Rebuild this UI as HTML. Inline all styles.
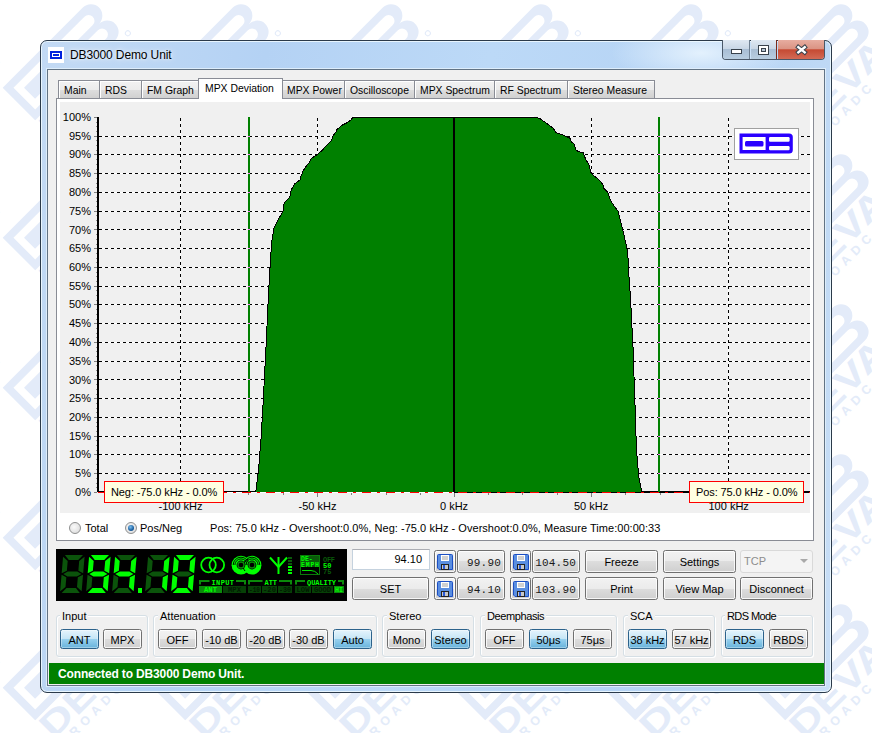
<!DOCTYPE html>
<html><head><meta charset="utf-8">
<style>
*{box-sizing:border-box;margin:0;padding:0}
html,body{width:872px;height:733px;overflow:hidden;background:#fff;font-family:"Liberation Sans",sans-serif;font-size:11px;color:#000}
.a{position:absolute}
svg{position:absolute;left:0;top:0}
#frame{position:absolute;left:40px;top:40px;width:792px;height:653px;border:1px solid #2b3a4a;border-radius:7px;
 background:radial-gradient(ellipse 90px 30px at 660px 12px,rgba(235,246,255,.85),rgba(235,246,255,0)),linear-gradient(100deg,#c3daf4 0%,#b4d2f4 25%,#bcd9f7 50%,#b5d3f4 75%,#c8def6 100%);box-shadow:inset 0 0 0 1px rgba(240,250,255,.85)}
#client{position:absolute;left:47px;top:69px;width:778px;height:617px;border:1px solid #627384;background:#f0f0f0;box-shadow:0 0 0 1px rgba(225,240,252,.9)}
.btn{position:absolute;border:1px solid #707070;border-radius:2.5px;background:linear-gradient(#f2f2f2 0%,#ebebeb 50%,#dddddd 50%,#cfcfcf 100%);box-shadow:inset 0 0 0 1px rgba(255,255,255,.8);text-align:center;color:#000}
.btn.on{border-color:#2c628b;background:linear-gradient(#e5f4fc 0%,#c4e5f6 50%,#98d1ef 50%,#68b3db 100%);box-shadow:inset 0 0 0 1px rgba(255,255,255,.35)}
.gb{position:absolute;border:1px solid #d5dfe5;border-radius:3px;box-shadow:inset 1px 1px 0 #fff,1px 1px 0 #fff}
.gbl{position:absolute;background:#f0f0f0;padding:0 2px;line-height:13px}
.tab{position:absolute;top:80px;height:19px;border:1px solid #898c95;border-bottom:none;background:linear-gradient(#f2f2f2 0%,#ebebeb 50%,#dddddd 50%,#cfcfcf 100%);box-shadow:inset 1px 1px 0 #fff;padding-left:5px;font-size:10.4px;line-height:19px;white-space:nowrap}
.tab.sel{top:78px;height:21px;background:#fff;z-index:2;line-height:19px;padding-left:6px}
#panel{position:absolute;left:56px;top:98px;width:758px;height:443px;border:1px solid #898c95;background:#fff}
.yl{left:50px;width:41px;text-align:right;line-height:12px}
.xl{top:500px;width:80px;text-align:center;line-height:12px}
.mono{font-family:"Liberation Mono",monospace;font-size:11px;text-align:right;padding-right:3px;padding-top:1px;line-height:22px;letter-spacing:0.2px;color:#1a1a1a}
.lbl{position:absolute;line-height:13px;white-space:nowrap}
</style></head><body>
<svg width="872" height="733"><g transform="translate(-297.3,-212.3) rotate(-45)"><path d="M0,0 H113 A11.75,11.5 0 0 1 113,23 A11.75,11.5 0 0 1 113,46 H0 Z M7.6,7.6 H62 V38.4 H7.6 Z M15,15.2 H55 V30.8 H15 Z M69.6,7.6 H108 A5.9,5.9 0 0 1 108,19.4 H69.6 Z M69.6,26.6 H108 A5.9,5.9 0 0 1 108,38.4 H69.6 Z" fill="#e3ebf9" fill-rule="evenodd"/><text x="-1" y="73" font-family="Liberation Sans" font-weight="bold" font-size="35" fill="#e3ebf9" textLength="122" lengthAdjust="spacingAndGlyphs">DEVA</text><text x="1" y="86" font-family="Liberation Sans" font-weight="bold" font-size="12.5" fill="#e3ebf9" textLength="124" lengthAdjust="spacing">BROADCAST</text><circle cx="127" cy="50" r="2.5" fill="none" stroke="#e3ebf9" stroke-width="1"/></g>
<g transform="translate(-297.3,-62.3) rotate(-45)"><path d="M0,0 H113 A11.75,11.5 0 0 1 113,23 A11.75,11.5 0 0 1 113,46 H0 Z M7.6,7.6 H62 V38.4 H7.6 Z M15,15.2 H55 V30.8 H15 Z M69.6,7.6 H108 A5.9,5.9 0 0 1 108,19.4 H69.6 Z M69.6,26.6 H108 A5.9,5.9 0 0 1 108,38.4 H69.6 Z" fill="#e3ebf9" fill-rule="evenodd"/><text x="-1" y="73" font-family="Liberation Sans" font-weight="bold" font-size="35" fill="#e3ebf9" textLength="122" lengthAdjust="spacingAndGlyphs">DEVA</text><text x="1" y="86" font-family="Liberation Sans" font-weight="bold" font-size="12.5" fill="#e3ebf9" textLength="124" lengthAdjust="spacing">BROADCAST</text><circle cx="127" cy="50" r="2.5" fill="none" stroke="#e3ebf9" stroke-width="1"/></g>
<g transform="translate(-297.3,87.7) rotate(-45)"><path d="M0,0 H113 A11.75,11.5 0 0 1 113,23 A11.75,11.5 0 0 1 113,46 H0 Z M7.6,7.6 H62 V38.4 H7.6 Z M15,15.2 H55 V30.8 H15 Z M69.6,7.6 H108 A5.9,5.9 0 0 1 108,19.4 H69.6 Z M69.6,26.6 H108 A5.9,5.9 0 0 1 108,38.4 H69.6 Z" fill="#e3ebf9" fill-rule="evenodd"/><text x="-1" y="73" font-family="Liberation Sans" font-weight="bold" font-size="35" fill="#e3ebf9" textLength="122" lengthAdjust="spacingAndGlyphs">DEVA</text><text x="1" y="86" font-family="Liberation Sans" font-weight="bold" font-size="12.5" fill="#e3ebf9" textLength="124" lengthAdjust="spacing">BROADCAST</text><circle cx="127" cy="50" r="2.5" fill="none" stroke="#e3ebf9" stroke-width="1"/></g>
<g transform="translate(-297.3,237.7) rotate(-45)"><path d="M0,0 H113 A11.75,11.5 0 0 1 113,23 A11.75,11.5 0 0 1 113,46 H0 Z M7.6,7.6 H62 V38.4 H7.6 Z M15,15.2 H55 V30.8 H15 Z M69.6,7.6 H108 A5.9,5.9 0 0 1 108,19.4 H69.6 Z M69.6,26.6 H108 A5.9,5.9 0 0 1 108,38.4 H69.6 Z" fill="#e3ebf9" fill-rule="evenodd"/><text x="-1" y="73" font-family="Liberation Sans" font-weight="bold" font-size="35" fill="#e3ebf9" textLength="122" lengthAdjust="spacingAndGlyphs">DEVA</text><text x="1" y="86" font-family="Liberation Sans" font-weight="bold" font-size="12.5" fill="#e3ebf9" textLength="124" lengthAdjust="spacing">BROADCAST</text><circle cx="127" cy="50" r="2.5" fill="none" stroke="#e3ebf9" stroke-width="1"/></g>
<g transform="translate(-297.3,387.7) rotate(-45)"><path d="M0,0 H113 A11.75,11.5 0 0 1 113,23 A11.75,11.5 0 0 1 113,46 H0 Z M7.6,7.6 H62 V38.4 H7.6 Z M15,15.2 H55 V30.8 H15 Z M69.6,7.6 H108 A5.9,5.9 0 0 1 108,19.4 H69.6 Z M69.6,26.6 H108 A5.9,5.9 0 0 1 108,38.4 H69.6 Z" fill="#e3ebf9" fill-rule="evenodd"/><text x="-1" y="73" font-family="Liberation Sans" font-weight="bold" font-size="35" fill="#e3ebf9" textLength="122" lengthAdjust="spacingAndGlyphs">DEVA</text><text x="1" y="86" font-family="Liberation Sans" font-weight="bold" font-size="12.5" fill="#e3ebf9" textLength="124" lengthAdjust="spacing">BROADCAST</text><circle cx="127" cy="50" r="2.5" fill="none" stroke="#e3ebf9" stroke-width="1"/></g>
<g transform="translate(-297.3,537.7) rotate(-45)"><path d="M0,0 H113 A11.75,11.5 0 0 1 113,23 A11.75,11.5 0 0 1 113,46 H0 Z M7.6,7.6 H62 V38.4 H7.6 Z M15,15.2 H55 V30.8 H15 Z M69.6,7.6 H108 A5.9,5.9 0 0 1 108,19.4 H69.6 Z M69.6,26.6 H108 A5.9,5.9 0 0 1 108,38.4 H69.6 Z" fill="#e3ebf9" fill-rule="evenodd"/><text x="-1" y="73" font-family="Liberation Sans" font-weight="bold" font-size="35" fill="#e3ebf9" textLength="122" lengthAdjust="spacingAndGlyphs">DEVA</text><text x="1" y="86" font-family="Liberation Sans" font-weight="bold" font-size="12.5" fill="#e3ebf9" textLength="124" lengthAdjust="spacing">BROADCAST</text><circle cx="127" cy="50" r="2.5" fill="none" stroke="#e3ebf9" stroke-width="1"/></g>
<g transform="translate(-297.3,687.7) rotate(-45)"><path d="M0,0 H113 A11.75,11.5 0 0 1 113,23 A11.75,11.5 0 0 1 113,46 H0 Z M7.6,7.6 H62 V38.4 H7.6 Z M15,15.2 H55 V30.8 H15 Z M69.6,7.6 H108 A5.9,5.9 0 0 1 108,19.4 H69.6 Z M69.6,26.6 H108 A5.9,5.9 0 0 1 108,38.4 H69.6 Z" fill="#e3ebf9" fill-rule="evenodd"/><text x="-1" y="73" font-family="Liberation Sans" font-weight="bold" font-size="35" fill="#e3ebf9" textLength="122" lengthAdjust="spacingAndGlyphs">DEVA</text><text x="1" y="86" font-family="Liberation Sans" font-weight="bold" font-size="12.5" fill="#e3ebf9" textLength="124" lengthAdjust="spacing">BROADCAST</text><circle cx="127" cy="50" r="2.5" fill="none" stroke="#e3ebf9" stroke-width="1"/></g>
<g transform="translate(-297.3,837.7) rotate(-45)"><path d="M0,0 H113 A11.75,11.5 0 0 1 113,23 A11.75,11.5 0 0 1 113,46 H0 Z M7.6,7.6 H62 V38.4 H7.6 Z M15,15.2 H55 V30.8 H15 Z M69.6,7.6 H108 A5.9,5.9 0 0 1 108,19.4 H69.6 Z M69.6,26.6 H108 A5.9,5.9 0 0 1 108,38.4 H69.6 Z" fill="#e3ebf9" fill-rule="evenodd"/><text x="-1" y="73" font-family="Liberation Sans" font-weight="bold" font-size="35" fill="#e3ebf9" textLength="122" lengthAdjust="spacingAndGlyphs">DEVA</text><text x="1" y="86" font-family="Liberation Sans" font-weight="bold" font-size="12.5" fill="#e3ebf9" textLength="124" lengthAdjust="spacing">BROADCAST</text><circle cx="127" cy="50" r="2.5" fill="none" stroke="#e3ebf9" stroke-width="1"/></g>
<g transform="translate(-147.3,-212.3) rotate(-45)"><path d="M0,0 H113 A11.75,11.5 0 0 1 113,23 A11.75,11.5 0 0 1 113,46 H0 Z M7.6,7.6 H62 V38.4 H7.6 Z M15,15.2 H55 V30.8 H15 Z M69.6,7.6 H108 A5.9,5.9 0 0 1 108,19.4 H69.6 Z M69.6,26.6 H108 A5.9,5.9 0 0 1 108,38.4 H69.6 Z" fill="#e3ebf9" fill-rule="evenodd"/><text x="-1" y="73" font-family="Liberation Sans" font-weight="bold" font-size="35" fill="#e3ebf9" textLength="122" lengthAdjust="spacingAndGlyphs">DEVA</text><text x="1" y="86" font-family="Liberation Sans" font-weight="bold" font-size="12.5" fill="#e3ebf9" textLength="124" lengthAdjust="spacing">BROADCAST</text><circle cx="127" cy="50" r="2.5" fill="none" stroke="#e3ebf9" stroke-width="1"/></g>
<g transform="translate(-147.3,-62.3) rotate(-45)"><path d="M0,0 H113 A11.75,11.5 0 0 1 113,23 A11.75,11.5 0 0 1 113,46 H0 Z M7.6,7.6 H62 V38.4 H7.6 Z M15,15.2 H55 V30.8 H15 Z M69.6,7.6 H108 A5.9,5.9 0 0 1 108,19.4 H69.6 Z M69.6,26.6 H108 A5.9,5.9 0 0 1 108,38.4 H69.6 Z" fill="#e3ebf9" fill-rule="evenodd"/><text x="-1" y="73" font-family="Liberation Sans" font-weight="bold" font-size="35" fill="#e3ebf9" textLength="122" lengthAdjust="spacingAndGlyphs">DEVA</text><text x="1" y="86" font-family="Liberation Sans" font-weight="bold" font-size="12.5" fill="#e3ebf9" textLength="124" lengthAdjust="spacing">BROADCAST</text><circle cx="127" cy="50" r="2.5" fill="none" stroke="#e3ebf9" stroke-width="1"/></g>
<g transform="translate(-147.3,87.7) rotate(-45)"><path d="M0,0 H113 A11.75,11.5 0 0 1 113,23 A11.75,11.5 0 0 1 113,46 H0 Z M7.6,7.6 H62 V38.4 H7.6 Z M15,15.2 H55 V30.8 H15 Z M69.6,7.6 H108 A5.9,5.9 0 0 1 108,19.4 H69.6 Z M69.6,26.6 H108 A5.9,5.9 0 0 1 108,38.4 H69.6 Z" fill="#e3ebf9" fill-rule="evenodd"/><text x="-1" y="73" font-family="Liberation Sans" font-weight="bold" font-size="35" fill="#e3ebf9" textLength="122" lengthAdjust="spacingAndGlyphs">DEVA</text><text x="1" y="86" font-family="Liberation Sans" font-weight="bold" font-size="12.5" fill="#e3ebf9" textLength="124" lengthAdjust="spacing">BROADCAST</text><circle cx="127" cy="50" r="2.5" fill="none" stroke="#e3ebf9" stroke-width="1"/></g>
<g transform="translate(-147.3,237.7) rotate(-45)"><path d="M0,0 H113 A11.75,11.5 0 0 1 113,23 A11.75,11.5 0 0 1 113,46 H0 Z M7.6,7.6 H62 V38.4 H7.6 Z M15,15.2 H55 V30.8 H15 Z M69.6,7.6 H108 A5.9,5.9 0 0 1 108,19.4 H69.6 Z M69.6,26.6 H108 A5.9,5.9 0 0 1 108,38.4 H69.6 Z" fill="#e3ebf9" fill-rule="evenodd"/><text x="-1" y="73" font-family="Liberation Sans" font-weight="bold" font-size="35" fill="#e3ebf9" textLength="122" lengthAdjust="spacingAndGlyphs">DEVA</text><text x="1" y="86" font-family="Liberation Sans" font-weight="bold" font-size="12.5" fill="#e3ebf9" textLength="124" lengthAdjust="spacing">BROADCAST</text><circle cx="127" cy="50" r="2.5" fill="none" stroke="#e3ebf9" stroke-width="1"/></g>
<g transform="translate(-147.3,387.7) rotate(-45)"><path d="M0,0 H113 A11.75,11.5 0 0 1 113,23 A11.75,11.5 0 0 1 113,46 H0 Z M7.6,7.6 H62 V38.4 H7.6 Z M15,15.2 H55 V30.8 H15 Z M69.6,7.6 H108 A5.9,5.9 0 0 1 108,19.4 H69.6 Z M69.6,26.6 H108 A5.9,5.9 0 0 1 108,38.4 H69.6 Z" fill="#e3ebf9" fill-rule="evenodd"/><text x="-1" y="73" font-family="Liberation Sans" font-weight="bold" font-size="35" fill="#e3ebf9" textLength="122" lengthAdjust="spacingAndGlyphs">DEVA</text><text x="1" y="86" font-family="Liberation Sans" font-weight="bold" font-size="12.5" fill="#e3ebf9" textLength="124" lengthAdjust="spacing">BROADCAST</text><circle cx="127" cy="50" r="2.5" fill="none" stroke="#e3ebf9" stroke-width="1"/></g>
<g transform="translate(-147.3,537.7) rotate(-45)"><path d="M0,0 H113 A11.75,11.5 0 0 1 113,23 A11.75,11.5 0 0 1 113,46 H0 Z M7.6,7.6 H62 V38.4 H7.6 Z M15,15.2 H55 V30.8 H15 Z M69.6,7.6 H108 A5.9,5.9 0 0 1 108,19.4 H69.6 Z M69.6,26.6 H108 A5.9,5.9 0 0 1 108,38.4 H69.6 Z" fill="#e3ebf9" fill-rule="evenodd"/><text x="-1" y="73" font-family="Liberation Sans" font-weight="bold" font-size="35" fill="#e3ebf9" textLength="122" lengthAdjust="spacingAndGlyphs">DEVA</text><text x="1" y="86" font-family="Liberation Sans" font-weight="bold" font-size="12.5" fill="#e3ebf9" textLength="124" lengthAdjust="spacing">BROADCAST</text><circle cx="127" cy="50" r="2.5" fill="none" stroke="#e3ebf9" stroke-width="1"/></g>
<g transform="translate(-147.3,687.7) rotate(-45)"><path d="M0,0 H113 A11.75,11.5 0 0 1 113,23 A11.75,11.5 0 0 1 113,46 H0 Z M7.6,7.6 H62 V38.4 H7.6 Z M15,15.2 H55 V30.8 H15 Z M69.6,7.6 H108 A5.9,5.9 0 0 1 108,19.4 H69.6 Z M69.6,26.6 H108 A5.9,5.9 0 0 1 108,38.4 H69.6 Z" fill="#e3ebf9" fill-rule="evenodd"/><text x="-1" y="73" font-family="Liberation Sans" font-weight="bold" font-size="35" fill="#e3ebf9" textLength="122" lengthAdjust="spacingAndGlyphs">DEVA</text><text x="1" y="86" font-family="Liberation Sans" font-weight="bold" font-size="12.5" fill="#e3ebf9" textLength="124" lengthAdjust="spacing">BROADCAST</text><circle cx="127" cy="50" r="2.5" fill="none" stroke="#e3ebf9" stroke-width="1"/></g>
<g transform="translate(-147.3,837.7) rotate(-45)"><path d="M0,0 H113 A11.75,11.5 0 0 1 113,23 A11.75,11.5 0 0 1 113,46 H0 Z M7.6,7.6 H62 V38.4 H7.6 Z M15,15.2 H55 V30.8 H15 Z M69.6,7.6 H108 A5.9,5.9 0 0 1 108,19.4 H69.6 Z M69.6,26.6 H108 A5.9,5.9 0 0 1 108,38.4 H69.6 Z" fill="#e3ebf9" fill-rule="evenodd"/><text x="-1" y="73" font-family="Liberation Sans" font-weight="bold" font-size="35" fill="#e3ebf9" textLength="122" lengthAdjust="spacingAndGlyphs">DEVA</text><text x="1" y="86" font-family="Liberation Sans" font-weight="bold" font-size="12.5" fill="#e3ebf9" textLength="124" lengthAdjust="spacing">BROADCAST</text><circle cx="127" cy="50" r="2.5" fill="none" stroke="#e3ebf9" stroke-width="1"/></g>
<g transform="translate(2.7,-212.3) rotate(-45)"><path d="M0,0 H113 A11.75,11.5 0 0 1 113,23 A11.75,11.5 0 0 1 113,46 H0 Z M7.6,7.6 H62 V38.4 H7.6 Z M15,15.2 H55 V30.8 H15 Z M69.6,7.6 H108 A5.9,5.9 0 0 1 108,19.4 H69.6 Z M69.6,26.6 H108 A5.9,5.9 0 0 1 108,38.4 H69.6 Z" fill="#e3ebf9" fill-rule="evenodd"/><text x="-1" y="73" font-family="Liberation Sans" font-weight="bold" font-size="35" fill="#e3ebf9" textLength="122" lengthAdjust="spacingAndGlyphs">DEVA</text><text x="1" y="86" font-family="Liberation Sans" font-weight="bold" font-size="12.5" fill="#e3ebf9" textLength="124" lengthAdjust="spacing">BROADCAST</text><circle cx="127" cy="50" r="2.5" fill="none" stroke="#e3ebf9" stroke-width="1"/></g>
<g transform="translate(2.7,-62.3) rotate(-45)"><path d="M0,0 H113 A11.75,11.5 0 0 1 113,23 A11.75,11.5 0 0 1 113,46 H0 Z M7.6,7.6 H62 V38.4 H7.6 Z M15,15.2 H55 V30.8 H15 Z M69.6,7.6 H108 A5.9,5.9 0 0 1 108,19.4 H69.6 Z M69.6,26.6 H108 A5.9,5.9 0 0 1 108,38.4 H69.6 Z" fill="#e3ebf9" fill-rule="evenodd"/><text x="-1" y="73" font-family="Liberation Sans" font-weight="bold" font-size="35" fill="#e3ebf9" textLength="122" lengthAdjust="spacingAndGlyphs">DEVA</text><text x="1" y="86" font-family="Liberation Sans" font-weight="bold" font-size="12.5" fill="#e3ebf9" textLength="124" lengthAdjust="spacing">BROADCAST</text><circle cx="127" cy="50" r="2.5" fill="none" stroke="#e3ebf9" stroke-width="1"/></g>
<g transform="translate(2.7,87.7) rotate(-45)"><path d="M0,0 H113 A11.75,11.5 0 0 1 113,23 A11.75,11.5 0 0 1 113,46 H0 Z M7.6,7.6 H62 V38.4 H7.6 Z M15,15.2 H55 V30.8 H15 Z M69.6,7.6 H108 A5.9,5.9 0 0 1 108,19.4 H69.6 Z M69.6,26.6 H108 A5.9,5.9 0 0 1 108,38.4 H69.6 Z" fill="#e3ebf9" fill-rule="evenodd"/><text x="-1" y="73" font-family="Liberation Sans" font-weight="bold" font-size="35" fill="#e3ebf9" textLength="122" lengthAdjust="spacingAndGlyphs">DEVA</text><text x="1" y="86" font-family="Liberation Sans" font-weight="bold" font-size="12.5" fill="#e3ebf9" textLength="124" lengthAdjust="spacing">BROADCAST</text><circle cx="127" cy="50" r="2.5" fill="none" stroke="#e3ebf9" stroke-width="1"/></g>
<g transform="translate(2.7,237.7) rotate(-45)"><path d="M0,0 H113 A11.75,11.5 0 0 1 113,23 A11.75,11.5 0 0 1 113,46 H0 Z M7.6,7.6 H62 V38.4 H7.6 Z M15,15.2 H55 V30.8 H15 Z M69.6,7.6 H108 A5.9,5.9 0 0 1 108,19.4 H69.6 Z M69.6,26.6 H108 A5.9,5.9 0 0 1 108,38.4 H69.6 Z" fill="#e3ebf9" fill-rule="evenodd"/><text x="-1" y="73" font-family="Liberation Sans" font-weight="bold" font-size="35" fill="#e3ebf9" textLength="122" lengthAdjust="spacingAndGlyphs">DEVA</text><text x="1" y="86" font-family="Liberation Sans" font-weight="bold" font-size="12.5" fill="#e3ebf9" textLength="124" lengthAdjust="spacing">BROADCAST</text><circle cx="127" cy="50" r="2.5" fill="none" stroke="#e3ebf9" stroke-width="1"/></g>
<g transform="translate(2.7,387.7) rotate(-45)"><path d="M0,0 H113 A11.75,11.5 0 0 1 113,23 A11.75,11.5 0 0 1 113,46 H0 Z M7.6,7.6 H62 V38.4 H7.6 Z M15,15.2 H55 V30.8 H15 Z M69.6,7.6 H108 A5.9,5.9 0 0 1 108,19.4 H69.6 Z M69.6,26.6 H108 A5.9,5.9 0 0 1 108,38.4 H69.6 Z" fill="#e3ebf9" fill-rule="evenodd"/><text x="-1" y="73" font-family="Liberation Sans" font-weight="bold" font-size="35" fill="#e3ebf9" textLength="122" lengthAdjust="spacingAndGlyphs">DEVA</text><text x="1" y="86" font-family="Liberation Sans" font-weight="bold" font-size="12.5" fill="#e3ebf9" textLength="124" lengthAdjust="spacing">BROADCAST</text><circle cx="127" cy="50" r="2.5" fill="none" stroke="#e3ebf9" stroke-width="1"/></g>
<g transform="translate(2.7,537.7) rotate(-45)"><path d="M0,0 H113 A11.75,11.5 0 0 1 113,23 A11.75,11.5 0 0 1 113,46 H0 Z M7.6,7.6 H62 V38.4 H7.6 Z M15,15.2 H55 V30.8 H15 Z M69.6,7.6 H108 A5.9,5.9 0 0 1 108,19.4 H69.6 Z M69.6,26.6 H108 A5.9,5.9 0 0 1 108,38.4 H69.6 Z" fill="#e3ebf9" fill-rule="evenodd"/><text x="-1" y="73" font-family="Liberation Sans" font-weight="bold" font-size="35" fill="#e3ebf9" textLength="122" lengthAdjust="spacingAndGlyphs">DEVA</text><text x="1" y="86" font-family="Liberation Sans" font-weight="bold" font-size="12.5" fill="#e3ebf9" textLength="124" lengthAdjust="spacing">BROADCAST</text><circle cx="127" cy="50" r="2.5" fill="none" stroke="#e3ebf9" stroke-width="1"/></g>
<g transform="translate(2.7,687.7) rotate(-45)"><path d="M0,0 H113 A11.75,11.5 0 0 1 113,23 A11.75,11.5 0 0 1 113,46 H0 Z M7.6,7.6 H62 V38.4 H7.6 Z M15,15.2 H55 V30.8 H15 Z M69.6,7.6 H108 A5.9,5.9 0 0 1 108,19.4 H69.6 Z M69.6,26.6 H108 A5.9,5.9 0 0 1 108,38.4 H69.6 Z" fill="#e3ebf9" fill-rule="evenodd"/><text x="-1" y="73" font-family="Liberation Sans" font-weight="bold" font-size="35" fill="#e3ebf9" textLength="122" lengthAdjust="spacingAndGlyphs">DEVA</text><text x="1" y="86" font-family="Liberation Sans" font-weight="bold" font-size="12.5" fill="#e3ebf9" textLength="124" lengthAdjust="spacing">BROADCAST</text><circle cx="127" cy="50" r="2.5" fill="none" stroke="#e3ebf9" stroke-width="1"/></g>
<g transform="translate(2.7,837.7) rotate(-45)"><path d="M0,0 H113 A11.75,11.5 0 0 1 113,23 A11.75,11.5 0 0 1 113,46 H0 Z M7.6,7.6 H62 V38.4 H7.6 Z M15,15.2 H55 V30.8 H15 Z M69.6,7.6 H108 A5.9,5.9 0 0 1 108,19.4 H69.6 Z M69.6,26.6 H108 A5.9,5.9 0 0 1 108,38.4 H69.6 Z" fill="#e3ebf9" fill-rule="evenodd"/><text x="-1" y="73" font-family="Liberation Sans" font-weight="bold" font-size="35" fill="#e3ebf9" textLength="122" lengthAdjust="spacingAndGlyphs">DEVA</text><text x="1" y="86" font-family="Liberation Sans" font-weight="bold" font-size="12.5" fill="#e3ebf9" textLength="124" lengthAdjust="spacing">BROADCAST</text><circle cx="127" cy="50" r="2.5" fill="none" stroke="#e3ebf9" stroke-width="1"/></g>
<g transform="translate(152.7,-212.3) rotate(-45)"><path d="M0,0 H113 A11.75,11.5 0 0 1 113,23 A11.75,11.5 0 0 1 113,46 H0 Z M7.6,7.6 H62 V38.4 H7.6 Z M15,15.2 H55 V30.8 H15 Z M69.6,7.6 H108 A5.9,5.9 0 0 1 108,19.4 H69.6 Z M69.6,26.6 H108 A5.9,5.9 0 0 1 108,38.4 H69.6 Z" fill="#e3ebf9" fill-rule="evenodd"/><text x="-1" y="73" font-family="Liberation Sans" font-weight="bold" font-size="35" fill="#e3ebf9" textLength="122" lengthAdjust="spacingAndGlyphs">DEVA</text><text x="1" y="86" font-family="Liberation Sans" font-weight="bold" font-size="12.5" fill="#e3ebf9" textLength="124" lengthAdjust="spacing">BROADCAST</text><circle cx="127" cy="50" r="2.5" fill="none" stroke="#e3ebf9" stroke-width="1"/></g>
<g transform="translate(152.7,-62.3) rotate(-45)"><path d="M0,0 H113 A11.75,11.5 0 0 1 113,23 A11.75,11.5 0 0 1 113,46 H0 Z M7.6,7.6 H62 V38.4 H7.6 Z M15,15.2 H55 V30.8 H15 Z M69.6,7.6 H108 A5.9,5.9 0 0 1 108,19.4 H69.6 Z M69.6,26.6 H108 A5.9,5.9 0 0 1 108,38.4 H69.6 Z" fill="#e3ebf9" fill-rule="evenodd"/><text x="-1" y="73" font-family="Liberation Sans" font-weight="bold" font-size="35" fill="#e3ebf9" textLength="122" lengthAdjust="spacingAndGlyphs">DEVA</text><text x="1" y="86" font-family="Liberation Sans" font-weight="bold" font-size="12.5" fill="#e3ebf9" textLength="124" lengthAdjust="spacing">BROADCAST</text><circle cx="127" cy="50" r="2.5" fill="none" stroke="#e3ebf9" stroke-width="1"/></g>
<g transform="translate(152.7,87.7) rotate(-45)"><path d="M0,0 H113 A11.75,11.5 0 0 1 113,23 A11.75,11.5 0 0 1 113,46 H0 Z M7.6,7.6 H62 V38.4 H7.6 Z M15,15.2 H55 V30.8 H15 Z M69.6,7.6 H108 A5.9,5.9 0 0 1 108,19.4 H69.6 Z M69.6,26.6 H108 A5.9,5.9 0 0 1 108,38.4 H69.6 Z" fill="#e3ebf9" fill-rule="evenodd"/><text x="-1" y="73" font-family="Liberation Sans" font-weight="bold" font-size="35" fill="#e3ebf9" textLength="122" lengthAdjust="spacingAndGlyphs">DEVA</text><text x="1" y="86" font-family="Liberation Sans" font-weight="bold" font-size="12.5" fill="#e3ebf9" textLength="124" lengthAdjust="spacing">BROADCAST</text><circle cx="127" cy="50" r="2.5" fill="none" stroke="#e3ebf9" stroke-width="1"/></g>
<g transform="translate(152.7,237.7) rotate(-45)"><path d="M0,0 H113 A11.75,11.5 0 0 1 113,23 A11.75,11.5 0 0 1 113,46 H0 Z M7.6,7.6 H62 V38.4 H7.6 Z M15,15.2 H55 V30.8 H15 Z M69.6,7.6 H108 A5.9,5.9 0 0 1 108,19.4 H69.6 Z M69.6,26.6 H108 A5.9,5.9 0 0 1 108,38.4 H69.6 Z" fill="#e3ebf9" fill-rule="evenodd"/><text x="-1" y="73" font-family="Liberation Sans" font-weight="bold" font-size="35" fill="#e3ebf9" textLength="122" lengthAdjust="spacingAndGlyphs">DEVA</text><text x="1" y="86" font-family="Liberation Sans" font-weight="bold" font-size="12.5" fill="#e3ebf9" textLength="124" lengthAdjust="spacing">BROADCAST</text><circle cx="127" cy="50" r="2.5" fill="none" stroke="#e3ebf9" stroke-width="1"/></g>
<g transform="translate(152.7,387.7) rotate(-45)"><path d="M0,0 H113 A11.75,11.5 0 0 1 113,23 A11.75,11.5 0 0 1 113,46 H0 Z M7.6,7.6 H62 V38.4 H7.6 Z M15,15.2 H55 V30.8 H15 Z M69.6,7.6 H108 A5.9,5.9 0 0 1 108,19.4 H69.6 Z M69.6,26.6 H108 A5.9,5.9 0 0 1 108,38.4 H69.6 Z" fill="#e3ebf9" fill-rule="evenodd"/><text x="-1" y="73" font-family="Liberation Sans" font-weight="bold" font-size="35" fill="#e3ebf9" textLength="122" lengthAdjust="spacingAndGlyphs">DEVA</text><text x="1" y="86" font-family="Liberation Sans" font-weight="bold" font-size="12.5" fill="#e3ebf9" textLength="124" lengthAdjust="spacing">BROADCAST</text><circle cx="127" cy="50" r="2.5" fill="none" stroke="#e3ebf9" stroke-width="1"/></g>
<g transform="translate(152.7,537.7) rotate(-45)"><path d="M0,0 H113 A11.75,11.5 0 0 1 113,23 A11.75,11.5 0 0 1 113,46 H0 Z M7.6,7.6 H62 V38.4 H7.6 Z M15,15.2 H55 V30.8 H15 Z M69.6,7.6 H108 A5.9,5.9 0 0 1 108,19.4 H69.6 Z M69.6,26.6 H108 A5.9,5.9 0 0 1 108,38.4 H69.6 Z" fill="#e3ebf9" fill-rule="evenodd"/><text x="-1" y="73" font-family="Liberation Sans" font-weight="bold" font-size="35" fill="#e3ebf9" textLength="122" lengthAdjust="spacingAndGlyphs">DEVA</text><text x="1" y="86" font-family="Liberation Sans" font-weight="bold" font-size="12.5" fill="#e3ebf9" textLength="124" lengthAdjust="spacing">BROADCAST</text><circle cx="127" cy="50" r="2.5" fill="none" stroke="#e3ebf9" stroke-width="1"/></g>
<g transform="translate(152.7,687.7) rotate(-45)"><path d="M0,0 H113 A11.75,11.5 0 0 1 113,23 A11.75,11.5 0 0 1 113,46 H0 Z M7.6,7.6 H62 V38.4 H7.6 Z M15,15.2 H55 V30.8 H15 Z M69.6,7.6 H108 A5.9,5.9 0 0 1 108,19.4 H69.6 Z M69.6,26.6 H108 A5.9,5.9 0 0 1 108,38.4 H69.6 Z" fill="#e3ebf9" fill-rule="evenodd"/><text x="-1" y="73" font-family="Liberation Sans" font-weight="bold" font-size="35" fill="#e3ebf9" textLength="122" lengthAdjust="spacingAndGlyphs">DEVA</text><text x="1" y="86" font-family="Liberation Sans" font-weight="bold" font-size="12.5" fill="#e3ebf9" textLength="124" lengthAdjust="spacing">BROADCAST</text><circle cx="127" cy="50" r="2.5" fill="none" stroke="#e3ebf9" stroke-width="1"/></g>
<g transform="translate(152.7,837.7) rotate(-45)"><path d="M0,0 H113 A11.75,11.5 0 0 1 113,23 A11.75,11.5 0 0 1 113,46 H0 Z M7.6,7.6 H62 V38.4 H7.6 Z M15,15.2 H55 V30.8 H15 Z M69.6,7.6 H108 A5.9,5.9 0 0 1 108,19.4 H69.6 Z M69.6,26.6 H108 A5.9,5.9 0 0 1 108,38.4 H69.6 Z" fill="#e3ebf9" fill-rule="evenodd"/><text x="-1" y="73" font-family="Liberation Sans" font-weight="bold" font-size="35" fill="#e3ebf9" textLength="122" lengthAdjust="spacingAndGlyphs">DEVA</text><text x="1" y="86" font-family="Liberation Sans" font-weight="bold" font-size="12.5" fill="#e3ebf9" textLength="124" lengthAdjust="spacing">BROADCAST</text><circle cx="127" cy="50" r="2.5" fill="none" stroke="#e3ebf9" stroke-width="1"/></g>
<g transform="translate(302.7,-212.3) rotate(-45)"><path d="M0,0 H113 A11.75,11.5 0 0 1 113,23 A11.75,11.5 0 0 1 113,46 H0 Z M7.6,7.6 H62 V38.4 H7.6 Z M15,15.2 H55 V30.8 H15 Z M69.6,7.6 H108 A5.9,5.9 0 0 1 108,19.4 H69.6 Z M69.6,26.6 H108 A5.9,5.9 0 0 1 108,38.4 H69.6 Z" fill="#e3ebf9" fill-rule="evenodd"/><text x="-1" y="73" font-family="Liberation Sans" font-weight="bold" font-size="35" fill="#e3ebf9" textLength="122" lengthAdjust="spacingAndGlyphs">DEVA</text><text x="1" y="86" font-family="Liberation Sans" font-weight="bold" font-size="12.5" fill="#e3ebf9" textLength="124" lengthAdjust="spacing">BROADCAST</text><circle cx="127" cy="50" r="2.5" fill="none" stroke="#e3ebf9" stroke-width="1"/></g>
<g transform="translate(302.7,-62.3) rotate(-45)"><path d="M0,0 H113 A11.75,11.5 0 0 1 113,23 A11.75,11.5 0 0 1 113,46 H0 Z M7.6,7.6 H62 V38.4 H7.6 Z M15,15.2 H55 V30.8 H15 Z M69.6,7.6 H108 A5.9,5.9 0 0 1 108,19.4 H69.6 Z M69.6,26.6 H108 A5.9,5.9 0 0 1 108,38.4 H69.6 Z" fill="#e3ebf9" fill-rule="evenodd"/><text x="-1" y="73" font-family="Liberation Sans" font-weight="bold" font-size="35" fill="#e3ebf9" textLength="122" lengthAdjust="spacingAndGlyphs">DEVA</text><text x="1" y="86" font-family="Liberation Sans" font-weight="bold" font-size="12.5" fill="#e3ebf9" textLength="124" lengthAdjust="spacing">BROADCAST</text><circle cx="127" cy="50" r="2.5" fill="none" stroke="#e3ebf9" stroke-width="1"/></g>
<g transform="translate(302.7,87.7) rotate(-45)"><path d="M0,0 H113 A11.75,11.5 0 0 1 113,23 A11.75,11.5 0 0 1 113,46 H0 Z M7.6,7.6 H62 V38.4 H7.6 Z M15,15.2 H55 V30.8 H15 Z M69.6,7.6 H108 A5.9,5.9 0 0 1 108,19.4 H69.6 Z M69.6,26.6 H108 A5.9,5.9 0 0 1 108,38.4 H69.6 Z" fill="#e3ebf9" fill-rule="evenodd"/><text x="-1" y="73" font-family="Liberation Sans" font-weight="bold" font-size="35" fill="#e3ebf9" textLength="122" lengthAdjust="spacingAndGlyphs">DEVA</text><text x="1" y="86" font-family="Liberation Sans" font-weight="bold" font-size="12.5" fill="#e3ebf9" textLength="124" lengthAdjust="spacing">BROADCAST</text><circle cx="127" cy="50" r="2.5" fill="none" stroke="#e3ebf9" stroke-width="1"/></g>
<g transform="translate(302.7,237.7) rotate(-45)"><path d="M0,0 H113 A11.75,11.5 0 0 1 113,23 A11.75,11.5 0 0 1 113,46 H0 Z M7.6,7.6 H62 V38.4 H7.6 Z M15,15.2 H55 V30.8 H15 Z M69.6,7.6 H108 A5.9,5.9 0 0 1 108,19.4 H69.6 Z M69.6,26.6 H108 A5.9,5.9 0 0 1 108,38.4 H69.6 Z" fill="#e3ebf9" fill-rule="evenodd"/><text x="-1" y="73" font-family="Liberation Sans" font-weight="bold" font-size="35" fill="#e3ebf9" textLength="122" lengthAdjust="spacingAndGlyphs">DEVA</text><text x="1" y="86" font-family="Liberation Sans" font-weight="bold" font-size="12.5" fill="#e3ebf9" textLength="124" lengthAdjust="spacing">BROADCAST</text><circle cx="127" cy="50" r="2.5" fill="none" stroke="#e3ebf9" stroke-width="1"/></g>
<g transform="translate(302.7,387.7) rotate(-45)"><path d="M0,0 H113 A11.75,11.5 0 0 1 113,23 A11.75,11.5 0 0 1 113,46 H0 Z M7.6,7.6 H62 V38.4 H7.6 Z M15,15.2 H55 V30.8 H15 Z M69.6,7.6 H108 A5.9,5.9 0 0 1 108,19.4 H69.6 Z M69.6,26.6 H108 A5.9,5.9 0 0 1 108,38.4 H69.6 Z" fill="#e3ebf9" fill-rule="evenodd"/><text x="-1" y="73" font-family="Liberation Sans" font-weight="bold" font-size="35" fill="#e3ebf9" textLength="122" lengthAdjust="spacingAndGlyphs">DEVA</text><text x="1" y="86" font-family="Liberation Sans" font-weight="bold" font-size="12.5" fill="#e3ebf9" textLength="124" lengthAdjust="spacing">BROADCAST</text><circle cx="127" cy="50" r="2.5" fill="none" stroke="#e3ebf9" stroke-width="1"/></g>
<g transform="translate(302.7,537.7) rotate(-45)"><path d="M0,0 H113 A11.75,11.5 0 0 1 113,23 A11.75,11.5 0 0 1 113,46 H0 Z M7.6,7.6 H62 V38.4 H7.6 Z M15,15.2 H55 V30.8 H15 Z M69.6,7.6 H108 A5.9,5.9 0 0 1 108,19.4 H69.6 Z M69.6,26.6 H108 A5.9,5.9 0 0 1 108,38.4 H69.6 Z" fill="#e3ebf9" fill-rule="evenodd"/><text x="-1" y="73" font-family="Liberation Sans" font-weight="bold" font-size="35" fill="#e3ebf9" textLength="122" lengthAdjust="spacingAndGlyphs">DEVA</text><text x="1" y="86" font-family="Liberation Sans" font-weight="bold" font-size="12.5" fill="#e3ebf9" textLength="124" lengthAdjust="spacing">BROADCAST</text><circle cx="127" cy="50" r="2.5" fill="none" stroke="#e3ebf9" stroke-width="1"/></g>
<g transform="translate(302.7,687.7) rotate(-45)"><path d="M0,0 H113 A11.75,11.5 0 0 1 113,23 A11.75,11.5 0 0 1 113,46 H0 Z M7.6,7.6 H62 V38.4 H7.6 Z M15,15.2 H55 V30.8 H15 Z M69.6,7.6 H108 A5.9,5.9 0 0 1 108,19.4 H69.6 Z M69.6,26.6 H108 A5.9,5.9 0 0 1 108,38.4 H69.6 Z" fill="#e3ebf9" fill-rule="evenodd"/><text x="-1" y="73" font-family="Liberation Sans" font-weight="bold" font-size="35" fill="#e3ebf9" textLength="122" lengthAdjust="spacingAndGlyphs">DEVA</text><text x="1" y="86" font-family="Liberation Sans" font-weight="bold" font-size="12.5" fill="#e3ebf9" textLength="124" lengthAdjust="spacing">BROADCAST</text><circle cx="127" cy="50" r="2.5" fill="none" stroke="#e3ebf9" stroke-width="1"/></g>
<g transform="translate(302.7,837.7) rotate(-45)"><path d="M0,0 H113 A11.75,11.5 0 0 1 113,23 A11.75,11.5 0 0 1 113,46 H0 Z M7.6,7.6 H62 V38.4 H7.6 Z M15,15.2 H55 V30.8 H15 Z M69.6,7.6 H108 A5.9,5.9 0 0 1 108,19.4 H69.6 Z M69.6,26.6 H108 A5.9,5.9 0 0 1 108,38.4 H69.6 Z" fill="#e3ebf9" fill-rule="evenodd"/><text x="-1" y="73" font-family="Liberation Sans" font-weight="bold" font-size="35" fill="#e3ebf9" textLength="122" lengthAdjust="spacingAndGlyphs">DEVA</text><text x="1" y="86" font-family="Liberation Sans" font-weight="bold" font-size="12.5" fill="#e3ebf9" textLength="124" lengthAdjust="spacing">BROADCAST</text><circle cx="127" cy="50" r="2.5" fill="none" stroke="#e3ebf9" stroke-width="1"/></g>
<g transform="translate(452.7,-212.3) rotate(-45)"><path d="M0,0 H113 A11.75,11.5 0 0 1 113,23 A11.75,11.5 0 0 1 113,46 H0 Z M7.6,7.6 H62 V38.4 H7.6 Z M15,15.2 H55 V30.8 H15 Z M69.6,7.6 H108 A5.9,5.9 0 0 1 108,19.4 H69.6 Z M69.6,26.6 H108 A5.9,5.9 0 0 1 108,38.4 H69.6 Z" fill="#e3ebf9" fill-rule="evenodd"/><text x="-1" y="73" font-family="Liberation Sans" font-weight="bold" font-size="35" fill="#e3ebf9" textLength="122" lengthAdjust="spacingAndGlyphs">DEVA</text><text x="1" y="86" font-family="Liberation Sans" font-weight="bold" font-size="12.5" fill="#e3ebf9" textLength="124" lengthAdjust="spacing">BROADCAST</text><circle cx="127" cy="50" r="2.5" fill="none" stroke="#e3ebf9" stroke-width="1"/></g>
<g transform="translate(452.7,-62.3) rotate(-45)"><path d="M0,0 H113 A11.75,11.5 0 0 1 113,23 A11.75,11.5 0 0 1 113,46 H0 Z M7.6,7.6 H62 V38.4 H7.6 Z M15,15.2 H55 V30.8 H15 Z M69.6,7.6 H108 A5.9,5.9 0 0 1 108,19.4 H69.6 Z M69.6,26.6 H108 A5.9,5.9 0 0 1 108,38.4 H69.6 Z" fill="#e3ebf9" fill-rule="evenodd"/><text x="-1" y="73" font-family="Liberation Sans" font-weight="bold" font-size="35" fill="#e3ebf9" textLength="122" lengthAdjust="spacingAndGlyphs">DEVA</text><text x="1" y="86" font-family="Liberation Sans" font-weight="bold" font-size="12.5" fill="#e3ebf9" textLength="124" lengthAdjust="spacing">BROADCAST</text><circle cx="127" cy="50" r="2.5" fill="none" stroke="#e3ebf9" stroke-width="1"/></g>
<g transform="translate(452.7,87.7) rotate(-45)"><path d="M0,0 H113 A11.75,11.5 0 0 1 113,23 A11.75,11.5 0 0 1 113,46 H0 Z M7.6,7.6 H62 V38.4 H7.6 Z M15,15.2 H55 V30.8 H15 Z M69.6,7.6 H108 A5.9,5.9 0 0 1 108,19.4 H69.6 Z M69.6,26.6 H108 A5.9,5.9 0 0 1 108,38.4 H69.6 Z" fill="#e3ebf9" fill-rule="evenodd"/><text x="-1" y="73" font-family="Liberation Sans" font-weight="bold" font-size="35" fill="#e3ebf9" textLength="122" lengthAdjust="spacingAndGlyphs">DEVA</text><text x="1" y="86" font-family="Liberation Sans" font-weight="bold" font-size="12.5" fill="#e3ebf9" textLength="124" lengthAdjust="spacing">BROADCAST</text><circle cx="127" cy="50" r="2.5" fill="none" stroke="#e3ebf9" stroke-width="1"/></g>
<g transform="translate(452.7,237.7) rotate(-45)"><path d="M0,0 H113 A11.75,11.5 0 0 1 113,23 A11.75,11.5 0 0 1 113,46 H0 Z M7.6,7.6 H62 V38.4 H7.6 Z M15,15.2 H55 V30.8 H15 Z M69.6,7.6 H108 A5.9,5.9 0 0 1 108,19.4 H69.6 Z M69.6,26.6 H108 A5.9,5.9 0 0 1 108,38.4 H69.6 Z" fill="#e3ebf9" fill-rule="evenodd"/><text x="-1" y="73" font-family="Liberation Sans" font-weight="bold" font-size="35" fill="#e3ebf9" textLength="122" lengthAdjust="spacingAndGlyphs">DEVA</text><text x="1" y="86" font-family="Liberation Sans" font-weight="bold" font-size="12.5" fill="#e3ebf9" textLength="124" lengthAdjust="spacing">BROADCAST</text><circle cx="127" cy="50" r="2.5" fill="none" stroke="#e3ebf9" stroke-width="1"/></g>
<g transform="translate(452.7,387.7) rotate(-45)"><path d="M0,0 H113 A11.75,11.5 0 0 1 113,23 A11.75,11.5 0 0 1 113,46 H0 Z M7.6,7.6 H62 V38.4 H7.6 Z M15,15.2 H55 V30.8 H15 Z M69.6,7.6 H108 A5.9,5.9 0 0 1 108,19.4 H69.6 Z M69.6,26.6 H108 A5.9,5.9 0 0 1 108,38.4 H69.6 Z" fill="#e3ebf9" fill-rule="evenodd"/><text x="-1" y="73" font-family="Liberation Sans" font-weight="bold" font-size="35" fill="#e3ebf9" textLength="122" lengthAdjust="spacingAndGlyphs">DEVA</text><text x="1" y="86" font-family="Liberation Sans" font-weight="bold" font-size="12.5" fill="#e3ebf9" textLength="124" lengthAdjust="spacing">BROADCAST</text><circle cx="127" cy="50" r="2.5" fill="none" stroke="#e3ebf9" stroke-width="1"/></g>
<g transform="translate(452.7,537.7) rotate(-45)"><path d="M0,0 H113 A11.75,11.5 0 0 1 113,23 A11.75,11.5 0 0 1 113,46 H0 Z M7.6,7.6 H62 V38.4 H7.6 Z M15,15.2 H55 V30.8 H15 Z M69.6,7.6 H108 A5.9,5.9 0 0 1 108,19.4 H69.6 Z M69.6,26.6 H108 A5.9,5.9 0 0 1 108,38.4 H69.6 Z" fill="#e3ebf9" fill-rule="evenodd"/><text x="-1" y="73" font-family="Liberation Sans" font-weight="bold" font-size="35" fill="#e3ebf9" textLength="122" lengthAdjust="spacingAndGlyphs">DEVA</text><text x="1" y="86" font-family="Liberation Sans" font-weight="bold" font-size="12.5" fill="#e3ebf9" textLength="124" lengthAdjust="spacing">BROADCAST</text><circle cx="127" cy="50" r="2.5" fill="none" stroke="#e3ebf9" stroke-width="1"/></g>
<g transform="translate(452.7,687.7) rotate(-45)"><path d="M0,0 H113 A11.75,11.5 0 0 1 113,23 A11.75,11.5 0 0 1 113,46 H0 Z M7.6,7.6 H62 V38.4 H7.6 Z M15,15.2 H55 V30.8 H15 Z M69.6,7.6 H108 A5.9,5.9 0 0 1 108,19.4 H69.6 Z M69.6,26.6 H108 A5.9,5.9 0 0 1 108,38.4 H69.6 Z" fill="#e3ebf9" fill-rule="evenodd"/><text x="-1" y="73" font-family="Liberation Sans" font-weight="bold" font-size="35" fill="#e3ebf9" textLength="122" lengthAdjust="spacingAndGlyphs">DEVA</text><text x="1" y="86" font-family="Liberation Sans" font-weight="bold" font-size="12.5" fill="#e3ebf9" textLength="124" lengthAdjust="spacing">BROADCAST</text><circle cx="127" cy="50" r="2.5" fill="none" stroke="#e3ebf9" stroke-width="1"/></g>
<g transform="translate(452.7,837.7) rotate(-45)"><path d="M0,0 H113 A11.75,11.5 0 0 1 113,23 A11.75,11.5 0 0 1 113,46 H0 Z M7.6,7.6 H62 V38.4 H7.6 Z M15,15.2 H55 V30.8 H15 Z M69.6,7.6 H108 A5.9,5.9 0 0 1 108,19.4 H69.6 Z M69.6,26.6 H108 A5.9,5.9 0 0 1 108,38.4 H69.6 Z" fill="#e3ebf9" fill-rule="evenodd"/><text x="-1" y="73" font-family="Liberation Sans" font-weight="bold" font-size="35" fill="#e3ebf9" textLength="122" lengthAdjust="spacingAndGlyphs">DEVA</text><text x="1" y="86" font-family="Liberation Sans" font-weight="bold" font-size="12.5" fill="#e3ebf9" textLength="124" lengthAdjust="spacing">BROADCAST</text><circle cx="127" cy="50" r="2.5" fill="none" stroke="#e3ebf9" stroke-width="1"/></g>
<g transform="translate(602.7,-212.3) rotate(-45)"><path d="M0,0 H113 A11.75,11.5 0 0 1 113,23 A11.75,11.5 0 0 1 113,46 H0 Z M7.6,7.6 H62 V38.4 H7.6 Z M15,15.2 H55 V30.8 H15 Z M69.6,7.6 H108 A5.9,5.9 0 0 1 108,19.4 H69.6 Z M69.6,26.6 H108 A5.9,5.9 0 0 1 108,38.4 H69.6 Z" fill="#e3ebf9" fill-rule="evenodd"/><text x="-1" y="73" font-family="Liberation Sans" font-weight="bold" font-size="35" fill="#e3ebf9" textLength="122" lengthAdjust="spacingAndGlyphs">DEVA</text><text x="1" y="86" font-family="Liberation Sans" font-weight="bold" font-size="12.5" fill="#e3ebf9" textLength="124" lengthAdjust="spacing">BROADCAST</text><circle cx="127" cy="50" r="2.5" fill="none" stroke="#e3ebf9" stroke-width="1"/></g>
<g transform="translate(602.7,-62.3) rotate(-45)"><path d="M0,0 H113 A11.75,11.5 0 0 1 113,23 A11.75,11.5 0 0 1 113,46 H0 Z M7.6,7.6 H62 V38.4 H7.6 Z M15,15.2 H55 V30.8 H15 Z M69.6,7.6 H108 A5.9,5.9 0 0 1 108,19.4 H69.6 Z M69.6,26.6 H108 A5.9,5.9 0 0 1 108,38.4 H69.6 Z" fill="#e3ebf9" fill-rule="evenodd"/><text x="-1" y="73" font-family="Liberation Sans" font-weight="bold" font-size="35" fill="#e3ebf9" textLength="122" lengthAdjust="spacingAndGlyphs">DEVA</text><text x="1" y="86" font-family="Liberation Sans" font-weight="bold" font-size="12.5" fill="#e3ebf9" textLength="124" lengthAdjust="spacing">BROADCAST</text><circle cx="127" cy="50" r="2.5" fill="none" stroke="#e3ebf9" stroke-width="1"/></g>
<g transform="translate(602.7,87.7) rotate(-45)"><path d="M0,0 H113 A11.75,11.5 0 0 1 113,23 A11.75,11.5 0 0 1 113,46 H0 Z M7.6,7.6 H62 V38.4 H7.6 Z M15,15.2 H55 V30.8 H15 Z M69.6,7.6 H108 A5.9,5.9 0 0 1 108,19.4 H69.6 Z M69.6,26.6 H108 A5.9,5.9 0 0 1 108,38.4 H69.6 Z" fill="#e3ebf9" fill-rule="evenodd"/><text x="-1" y="73" font-family="Liberation Sans" font-weight="bold" font-size="35" fill="#e3ebf9" textLength="122" lengthAdjust="spacingAndGlyphs">DEVA</text><text x="1" y="86" font-family="Liberation Sans" font-weight="bold" font-size="12.5" fill="#e3ebf9" textLength="124" lengthAdjust="spacing">BROADCAST</text><circle cx="127" cy="50" r="2.5" fill="none" stroke="#e3ebf9" stroke-width="1"/></g>
<g transform="translate(602.7,237.7) rotate(-45)"><path d="M0,0 H113 A11.75,11.5 0 0 1 113,23 A11.75,11.5 0 0 1 113,46 H0 Z M7.6,7.6 H62 V38.4 H7.6 Z M15,15.2 H55 V30.8 H15 Z M69.6,7.6 H108 A5.9,5.9 0 0 1 108,19.4 H69.6 Z M69.6,26.6 H108 A5.9,5.9 0 0 1 108,38.4 H69.6 Z" fill="#e3ebf9" fill-rule="evenodd"/><text x="-1" y="73" font-family="Liberation Sans" font-weight="bold" font-size="35" fill="#e3ebf9" textLength="122" lengthAdjust="spacingAndGlyphs">DEVA</text><text x="1" y="86" font-family="Liberation Sans" font-weight="bold" font-size="12.5" fill="#e3ebf9" textLength="124" lengthAdjust="spacing">BROADCAST</text><circle cx="127" cy="50" r="2.5" fill="none" stroke="#e3ebf9" stroke-width="1"/></g>
<g transform="translate(602.7,387.7) rotate(-45)"><path d="M0,0 H113 A11.75,11.5 0 0 1 113,23 A11.75,11.5 0 0 1 113,46 H0 Z M7.6,7.6 H62 V38.4 H7.6 Z M15,15.2 H55 V30.8 H15 Z M69.6,7.6 H108 A5.9,5.9 0 0 1 108,19.4 H69.6 Z M69.6,26.6 H108 A5.9,5.9 0 0 1 108,38.4 H69.6 Z" fill="#e3ebf9" fill-rule="evenodd"/><text x="-1" y="73" font-family="Liberation Sans" font-weight="bold" font-size="35" fill="#e3ebf9" textLength="122" lengthAdjust="spacingAndGlyphs">DEVA</text><text x="1" y="86" font-family="Liberation Sans" font-weight="bold" font-size="12.5" fill="#e3ebf9" textLength="124" lengthAdjust="spacing">BROADCAST</text><circle cx="127" cy="50" r="2.5" fill="none" stroke="#e3ebf9" stroke-width="1"/></g>
<g transform="translate(602.7,537.7) rotate(-45)"><path d="M0,0 H113 A11.75,11.5 0 0 1 113,23 A11.75,11.5 0 0 1 113,46 H0 Z M7.6,7.6 H62 V38.4 H7.6 Z M15,15.2 H55 V30.8 H15 Z M69.6,7.6 H108 A5.9,5.9 0 0 1 108,19.4 H69.6 Z M69.6,26.6 H108 A5.9,5.9 0 0 1 108,38.4 H69.6 Z" fill="#e3ebf9" fill-rule="evenodd"/><text x="-1" y="73" font-family="Liberation Sans" font-weight="bold" font-size="35" fill="#e3ebf9" textLength="122" lengthAdjust="spacingAndGlyphs">DEVA</text><text x="1" y="86" font-family="Liberation Sans" font-weight="bold" font-size="12.5" fill="#e3ebf9" textLength="124" lengthAdjust="spacing">BROADCAST</text><circle cx="127" cy="50" r="2.5" fill="none" stroke="#e3ebf9" stroke-width="1"/></g>
<g transform="translate(602.7,687.7) rotate(-45)"><path d="M0,0 H113 A11.75,11.5 0 0 1 113,23 A11.75,11.5 0 0 1 113,46 H0 Z M7.6,7.6 H62 V38.4 H7.6 Z M15,15.2 H55 V30.8 H15 Z M69.6,7.6 H108 A5.9,5.9 0 0 1 108,19.4 H69.6 Z M69.6,26.6 H108 A5.9,5.9 0 0 1 108,38.4 H69.6 Z" fill="#e3ebf9" fill-rule="evenodd"/><text x="-1" y="73" font-family="Liberation Sans" font-weight="bold" font-size="35" fill="#e3ebf9" textLength="122" lengthAdjust="spacingAndGlyphs">DEVA</text><text x="1" y="86" font-family="Liberation Sans" font-weight="bold" font-size="12.5" fill="#e3ebf9" textLength="124" lengthAdjust="spacing">BROADCAST</text><circle cx="127" cy="50" r="2.5" fill="none" stroke="#e3ebf9" stroke-width="1"/></g>
<g transform="translate(602.7,837.7) rotate(-45)"><path d="M0,0 H113 A11.75,11.5 0 0 1 113,23 A11.75,11.5 0 0 1 113,46 H0 Z M7.6,7.6 H62 V38.4 H7.6 Z M15,15.2 H55 V30.8 H15 Z M69.6,7.6 H108 A5.9,5.9 0 0 1 108,19.4 H69.6 Z M69.6,26.6 H108 A5.9,5.9 0 0 1 108,38.4 H69.6 Z" fill="#e3ebf9" fill-rule="evenodd"/><text x="-1" y="73" font-family="Liberation Sans" font-weight="bold" font-size="35" fill="#e3ebf9" textLength="122" lengthAdjust="spacingAndGlyphs">DEVA</text><text x="1" y="86" font-family="Liberation Sans" font-weight="bold" font-size="12.5" fill="#e3ebf9" textLength="124" lengthAdjust="spacing">BROADCAST</text><circle cx="127" cy="50" r="2.5" fill="none" stroke="#e3ebf9" stroke-width="1"/></g>
<g transform="translate(752.7,-212.3) rotate(-45)"><path d="M0,0 H113 A11.75,11.5 0 0 1 113,23 A11.75,11.5 0 0 1 113,46 H0 Z M7.6,7.6 H62 V38.4 H7.6 Z M15,15.2 H55 V30.8 H15 Z M69.6,7.6 H108 A5.9,5.9 0 0 1 108,19.4 H69.6 Z M69.6,26.6 H108 A5.9,5.9 0 0 1 108,38.4 H69.6 Z" fill="#e3ebf9" fill-rule="evenodd"/><text x="-1" y="73" font-family="Liberation Sans" font-weight="bold" font-size="35" fill="#e3ebf9" textLength="122" lengthAdjust="spacingAndGlyphs">DEVA</text><text x="1" y="86" font-family="Liberation Sans" font-weight="bold" font-size="12.5" fill="#e3ebf9" textLength="124" lengthAdjust="spacing">BROADCAST</text><circle cx="127" cy="50" r="2.5" fill="none" stroke="#e3ebf9" stroke-width="1"/></g>
<g transform="translate(752.7,-62.3) rotate(-45)"><path d="M0,0 H113 A11.75,11.5 0 0 1 113,23 A11.75,11.5 0 0 1 113,46 H0 Z M7.6,7.6 H62 V38.4 H7.6 Z M15,15.2 H55 V30.8 H15 Z M69.6,7.6 H108 A5.9,5.9 0 0 1 108,19.4 H69.6 Z M69.6,26.6 H108 A5.9,5.9 0 0 1 108,38.4 H69.6 Z" fill="#e3ebf9" fill-rule="evenodd"/><text x="-1" y="73" font-family="Liberation Sans" font-weight="bold" font-size="35" fill="#e3ebf9" textLength="122" lengthAdjust="spacingAndGlyphs">DEVA</text><text x="1" y="86" font-family="Liberation Sans" font-weight="bold" font-size="12.5" fill="#e3ebf9" textLength="124" lengthAdjust="spacing">BROADCAST</text><circle cx="127" cy="50" r="2.5" fill="none" stroke="#e3ebf9" stroke-width="1"/></g>
<g transform="translate(752.7,87.7) rotate(-45)"><path d="M0,0 H113 A11.75,11.5 0 0 1 113,23 A11.75,11.5 0 0 1 113,46 H0 Z M7.6,7.6 H62 V38.4 H7.6 Z M15,15.2 H55 V30.8 H15 Z M69.6,7.6 H108 A5.9,5.9 0 0 1 108,19.4 H69.6 Z M69.6,26.6 H108 A5.9,5.9 0 0 1 108,38.4 H69.6 Z" fill="#e3ebf9" fill-rule="evenodd"/><text x="-1" y="73" font-family="Liberation Sans" font-weight="bold" font-size="35" fill="#e3ebf9" textLength="122" lengthAdjust="spacingAndGlyphs">DEVA</text><text x="1" y="86" font-family="Liberation Sans" font-weight="bold" font-size="12.5" fill="#e3ebf9" textLength="124" lengthAdjust="spacing">BROADCAST</text><circle cx="127" cy="50" r="2.5" fill="none" stroke="#e3ebf9" stroke-width="1"/></g>
<g transform="translate(752.7,237.7) rotate(-45)"><path d="M0,0 H113 A11.75,11.5 0 0 1 113,23 A11.75,11.5 0 0 1 113,46 H0 Z M7.6,7.6 H62 V38.4 H7.6 Z M15,15.2 H55 V30.8 H15 Z M69.6,7.6 H108 A5.9,5.9 0 0 1 108,19.4 H69.6 Z M69.6,26.6 H108 A5.9,5.9 0 0 1 108,38.4 H69.6 Z" fill="#e3ebf9" fill-rule="evenodd"/><text x="-1" y="73" font-family="Liberation Sans" font-weight="bold" font-size="35" fill="#e3ebf9" textLength="122" lengthAdjust="spacingAndGlyphs">DEVA</text><text x="1" y="86" font-family="Liberation Sans" font-weight="bold" font-size="12.5" fill="#e3ebf9" textLength="124" lengthAdjust="spacing">BROADCAST</text><circle cx="127" cy="50" r="2.5" fill="none" stroke="#e3ebf9" stroke-width="1"/></g>
<g transform="translate(752.7,387.7) rotate(-45)"><path d="M0,0 H113 A11.75,11.5 0 0 1 113,23 A11.75,11.5 0 0 1 113,46 H0 Z M7.6,7.6 H62 V38.4 H7.6 Z M15,15.2 H55 V30.8 H15 Z M69.6,7.6 H108 A5.9,5.9 0 0 1 108,19.4 H69.6 Z M69.6,26.6 H108 A5.9,5.9 0 0 1 108,38.4 H69.6 Z" fill="#e3ebf9" fill-rule="evenodd"/><text x="-1" y="73" font-family="Liberation Sans" font-weight="bold" font-size="35" fill="#e3ebf9" textLength="122" lengthAdjust="spacingAndGlyphs">DEVA</text><text x="1" y="86" font-family="Liberation Sans" font-weight="bold" font-size="12.5" fill="#e3ebf9" textLength="124" lengthAdjust="spacing">BROADCAST</text><circle cx="127" cy="50" r="2.5" fill="none" stroke="#e3ebf9" stroke-width="1"/></g>
<g transform="translate(752.7,537.7) rotate(-45)"><path d="M0,0 H113 A11.75,11.5 0 0 1 113,23 A11.75,11.5 0 0 1 113,46 H0 Z M7.6,7.6 H62 V38.4 H7.6 Z M15,15.2 H55 V30.8 H15 Z M69.6,7.6 H108 A5.9,5.9 0 0 1 108,19.4 H69.6 Z M69.6,26.6 H108 A5.9,5.9 0 0 1 108,38.4 H69.6 Z" fill="#e3ebf9" fill-rule="evenodd"/><text x="-1" y="73" font-family="Liberation Sans" font-weight="bold" font-size="35" fill="#e3ebf9" textLength="122" lengthAdjust="spacingAndGlyphs">DEVA</text><text x="1" y="86" font-family="Liberation Sans" font-weight="bold" font-size="12.5" fill="#e3ebf9" textLength="124" lengthAdjust="spacing">BROADCAST</text><circle cx="127" cy="50" r="2.5" fill="none" stroke="#e3ebf9" stroke-width="1"/></g>
<g transform="translate(752.7,687.7) rotate(-45)"><path d="M0,0 H113 A11.75,11.5 0 0 1 113,23 A11.75,11.5 0 0 1 113,46 H0 Z M7.6,7.6 H62 V38.4 H7.6 Z M15,15.2 H55 V30.8 H15 Z M69.6,7.6 H108 A5.9,5.9 0 0 1 108,19.4 H69.6 Z M69.6,26.6 H108 A5.9,5.9 0 0 1 108,38.4 H69.6 Z" fill="#e3ebf9" fill-rule="evenodd"/><text x="-1" y="73" font-family="Liberation Sans" font-weight="bold" font-size="35" fill="#e3ebf9" textLength="122" lengthAdjust="spacingAndGlyphs">DEVA</text><text x="1" y="86" font-family="Liberation Sans" font-weight="bold" font-size="12.5" fill="#e3ebf9" textLength="124" lengthAdjust="spacing">BROADCAST</text><circle cx="127" cy="50" r="2.5" fill="none" stroke="#e3ebf9" stroke-width="1"/></g>
<g transform="translate(752.7,837.7) rotate(-45)"><path d="M0,0 H113 A11.75,11.5 0 0 1 113,23 A11.75,11.5 0 0 1 113,46 H0 Z M7.6,7.6 H62 V38.4 H7.6 Z M15,15.2 H55 V30.8 H15 Z M69.6,7.6 H108 A5.9,5.9 0 0 1 108,19.4 H69.6 Z M69.6,26.6 H108 A5.9,5.9 0 0 1 108,38.4 H69.6 Z" fill="#e3ebf9" fill-rule="evenodd"/><text x="-1" y="73" font-family="Liberation Sans" font-weight="bold" font-size="35" fill="#e3ebf9" textLength="122" lengthAdjust="spacingAndGlyphs">DEVA</text><text x="1" y="86" font-family="Liberation Sans" font-weight="bold" font-size="12.5" fill="#e3ebf9" textLength="124" lengthAdjust="spacing">BROADCAST</text><circle cx="127" cy="50" r="2.5" fill="none" stroke="#e3ebf9" stroke-width="1"/></g>
<g transform="translate(902.7,-212.3) rotate(-45)"><path d="M0,0 H113 A11.75,11.5 0 0 1 113,23 A11.75,11.5 0 0 1 113,46 H0 Z M7.6,7.6 H62 V38.4 H7.6 Z M15,15.2 H55 V30.8 H15 Z M69.6,7.6 H108 A5.9,5.9 0 0 1 108,19.4 H69.6 Z M69.6,26.6 H108 A5.9,5.9 0 0 1 108,38.4 H69.6 Z" fill="#e3ebf9" fill-rule="evenodd"/><text x="-1" y="73" font-family="Liberation Sans" font-weight="bold" font-size="35" fill="#e3ebf9" textLength="122" lengthAdjust="spacingAndGlyphs">DEVA</text><text x="1" y="86" font-family="Liberation Sans" font-weight="bold" font-size="12.5" fill="#e3ebf9" textLength="124" lengthAdjust="spacing">BROADCAST</text><circle cx="127" cy="50" r="2.5" fill="none" stroke="#e3ebf9" stroke-width="1"/></g>
<g transform="translate(902.7,-62.3) rotate(-45)"><path d="M0,0 H113 A11.75,11.5 0 0 1 113,23 A11.75,11.5 0 0 1 113,46 H0 Z M7.6,7.6 H62 V38.4 H7.6 Z M15,15.2 H55 V30.8 H15 Z M69.6,7.6 H108 A5.9,5.9 0 0 1 108,19.4 H69.6 Z M69.6,26.6 H108 A5.9,5.9 0 0 1 108,38.4 H69.6 Z" fill="#e3ebf9" fill-rule="evenodd"/><text x="-1" y="73" font-family="Liberation Sans" font-weight="bold" font-size="35" fill="#e3ebf9" textLength="122" lengthAdjust="spacingAndGlyphs">DEVA</text><text x="1" y="86" font-family="Liberation Sans" font-weight="bold" font-size="12.5" fill="#e3ebf9" textLength="124" lengthAdjust="spacing">BROADCAST</text><circle cx="127" cy="50" r="2.5" fill="none" stroke="#e3ebf9" stroke-width="1"/></g>
<g transform="translate(902.7,87.7) rotate(-45)"><path d="M0,0 H113 A11.75,11.5 0 0 1 113,23 A11.75,11.5 0 0 1 113,46 H0 Z M7.6,7.6 H62 V38.4 H7.6 Z M15,15.2 H55 V30.8 H15 Z M69.6,7.6 H108 A5.9,5.9 0 0 1 108,19.4 H69.6 Z M69.6,26.6 H108 A5.9,5.9 0 0 1 108,38.4 H69.6 Z" fill="#e3ebf9" fill-rule="evenodd"/><text x="-1" y="73" font-family="Liberation Sans" font-weight="bold" font-size="35" fill="#e3ebf9" textLength="122" lengthAdjust="spacingAndGlyphs">DEVA</text><text x="1" y="86" font-family="Liberation Sans" font-weight="bold" font-size="12.5" fill="#e3ebf9" textLength="124" lengthAdjust="spacing">BROADCAST</text><circle cx="127" cy="50" r="2.5" fill="none" stroke="#e3ebf9" stroke-width="1"/></g>
<g transform="translate(902.7,237.7) rotate(-45)"><path d="M0,0 H113 A11.75,11.5 0 0 1 113,23 A11.75,11.5 0 0 1 113,46 H0 Z M7.6,7.6 H62 V38.4 H7.6 Z M15,15.2 H55 V30.8 H15 Z M69.6,7.6 H108 A5.9,5.9 0 0 1 108,19.4 H69.6 Z M69.6,26.6 H108 A5.9,5.9 0 0 1 108,38.4 H69.6 Z" fill="#e3ebf9" fill-rule="evenodd"/><text x="-1" y="73" font-family="Liberation Sans" font-weight="bold" font-size="35" fill="#e3ebf9" textLength="122" lengthAdjust="spacingAndGlyphs">DEVA</text><text x="1" y="86" font-family="Liberation Sans" font-weight="bold" font-size="12.5" fill="#e3ebf9" textLength="124" lengthAdjust="spacing">BROADCAST</text><circle cx="127" cy="50" r="2.5" fill="none" stroke="#e3ebf9" stroke-width="1"/></g>
<g transform="translate(902.7,387.7) rotate(-45)"><path d="M0,0 H113 A11.75,11.5 0 0 1 113,23 A11.75,11.5 0 0 1 113,46 H0 Z M7.6,7.6 H62 V38.4 H7.6 Z M15,15.2 H55 V30.8 H15 Z M69.6,7.6 H108 A5.9,5.9 0 0 1 108,19.4 H69.6 Z M69.6,26.6 H108 A5.9,5.9 0 0 1 108,38.4 H69.6 Z" fill="#e3ebf9" fill-rule="evenodd"/><text x="-1" y="73" font-family="Liberation Sans" font-weight="bold" font-size="35" fill="#e3ebf9" textLength="122" lengthAdjust="spacingAndGlyphs">DEVA</text><text x="1" y="86" font-family="Liberation Sans" font-weight="bold" font-size="12.5" fill="#e3ebf9" textLength="124" lengthAdjust="spacing">BROADCAST</text><circle cx="127" cy="50" r="2.5" fill="none" stroke="#e3ebf9" stroke-width="1"/></g>
<g transform="translate(902.7,537.7) rotate(-45)"><path d="M0,0 H113 A11.75,11.5 0 0 1 113,23 A11.75,11.5 0 0 1 113,46 H0 Z M7.6,7.6 H62 V38.4 H7.6 Z M15,15.2 H55 V30.8 H15 Z M69.6,7.6 H108 A5.9,5.9 0 0 1 108,19.4 H69.6 Z M69.6,26.6 H108 A5.9,5.9 0 0 1 108,38.4 H69.6 Z" fill="#e3ebf9" fill-rule="evenodd"/><text x="-1" y="73" font-family="Liberation Sans" font-weight="bold" font-size="35" fill="#e3ebf9" textLength="122" lengthAdjust="spacingAndGlyphs">DEVA</text><text x="1" y="86" font-family="Liberation Sans" font-weight="bold" font-size="12.5" fill="#e3ebf9" textLength="124" lengthAdjust="spacing">BROADCAST</text><circle cx="127" cy="50" r="2.5" fill="none" stroke="#e3ebf9" stroke-width="1"/></g>
<g transform="translate(902.7,687.7) rotate(-45)"><path d="M0,0 H113 A11.75,11.5 0 0 1 113,23 A11.75,11.5 0 0 1 113,46 H0 Z M7.6,7.6 H62 V38.4 H7.6 Z M15,15.2 H55 V30.8 H15 Z M69.6,7.6 H108 A5.9,5.9 0 0 1 108,19.4 H69.6 Z M69.6,26.6 H108 A5.9,5.9 0 0 1 108,38.4 H69.6 Z" fill="#e3ebf9" fill-rule="evenodd"/><text x="-1" y="73" font-family="Liberation Sans" font-weight="bold" font-size="35" fill="#e3ebf9" textLength="122" lengthAdjust="spacingAndGlyphs">DEVA</text><text x="1" y="86" font-family="Liberation Sans" font-weight="bold" font-size="12.5" fill="#e3ebf9" textLength="124" lengthAdjust="spacing">BROADCAST</text><circle cx="127" cy="50" r="2.5" fill="none" stroke="#e3ebf9" stroke-width="1"/></g>
<g transform="translate(902.7,837.7) rotate(-45)"><path d="M0,0 H113 A11.75,11.5 0 0 1 113,23 A11.75,11.5 0 0 1 113,46 H0 Z M7.6,7.6 H62 V38.4 H7.6 Z M15,15.2 H55 V30.8 H15 Z M69.6,7.6 H108 A5.9,5.9 0 0 1 108,19.4 H69.6 Z M69.6,26.6 H108 A5.9,5.9 0 0 1 108,38.4 H69.6 Z" fill="#e3ebf9" fill-rule="evenodd"/><text x="-1" y="73" font-family="Liberation Sans" font-weight="bold" font-size="35" fill="#e3ebf9" textLength="122" lengthAdjust="spacingAndGlyphs">DEVA</text><text x="1" y="86" font-family="Liberation Sans" font-weight="bold" font-size="12.5" fill="#e3ebf9" textLength="124" lengthAdjust="spacing">BROADCAST</text><circle cx="127" cy="50" r="2.5" fill="none" stroke="#e3ebf9" stroke-width="1"/></g></svg>
<div id="frame"></div>
<!-- title icon -->
<div class="a" style="left:48px;top:47px;width:16px;height:16px;background:#fff"></div>
<div class="a" style="left:50px;top:51px;width:12px;height:8px;background:#0022dd"></div>
<div class="a" style="left:52px;top:53px;width:8px;height:4px;background:#fff"></div>
<div class="a" style="left:53px;top:54px;width:6px;height:2px;background:#0022dd"></div>
<div class="a" style="left:70px;top:47px;font-size:12px;line-height:16px;letter-spacing:-0.12px;text-shadow:0 0 6px rgba(255,255,255,.9),0 0 3px rgba(255,255,255,.7)">DB3000 Demo Unit</div>
<div id="client"></div>
<div class="tab" style="left:58px;width:42px">Main</div>
<div class="tab" style="left:99px;width:43px">RDS</div>
<div class="tab" style="left:141px;width:59px">FM Graph</div>
<div class="tab sel" style="left:198px;width:85px">MPX Deviation</div>
<div class="tab" style="left:281px;width:65px">MPX Power</div>
<div class="tab" style="left:344px;width:71px">Oscilloscope</div>
<div class="tab" style="left:414px;width:81px">MPX Spectrum</div>
<div class="tab" style="left:494px;width:74px">RF Spectrum</div>
<div class="tab" style="left:567px;width:88px">Stereo Measure</div>
<div id="panel"></div>
<svg width="872" height="733" shape-rendering="crispEdges">
<rect x="60" y="102" width="750" height="411" fill="#f0f0f0"/>
<line x1="99" y1="136.5" x2="810" y2="136.5" stroke="#fff" stroke-width="1"/>
<line x1="99" y1="136.5" x2="810" y2="136.5" stroke="#000" stroke-width="1" stroke-dasharray="3 3"/>
<line x1="99" y1="154.5" x2="810" y2="154.5" stroke="#fff" stroke-width="1"/>
<line x1="99" y1="154.5" x2="810" y2="154.5" stroke="#000" stroke-width="1" stroke-dasharray="3 3"/>
<line x1="99" y1="173.5" x2="810" y2="173.5" stroke="#fff" stroke-width="1"/>
<line x1="99" y1="173.5" x2="810" y2="173.5" stroke="#000" stroke-width="1" stroke-dasharray="3 3"/>
<line x1="99" y1="192.5" x2="810" y2="192.5" stroke="#fff" stroke-width="1"/>
<line x1="99" y1="192.5" x2="810" y2="192.5" stroke="#000" stroke-width="1" stroke-dasharray="3 3"/>
<line x1="99" y1="211.5" x2="810" y2="211.5" stroke="#fff" stroke-width="1"/>
<line x1="99" y1="211.5" x2="810" y2="211.5" stroke="#000" stroke-width="1" stroke-dasharray="3 3"/>
<line x1="99" y1="229.5" x2="810" y2="229.5" stroke="#fff" stroke-width="1"/>
<line x1="99" y1="229.5" x2="810" y2="229.5" stroke="#000" stroke-width="1" stroke-dasharray="3 3"/>
<line x1="99" y1="248.5" x2="810" y2="248.5" stroke="#fff" stroke-width="1"/>
<line x1="99" y1="248.5" x2="810" y2="248.5" stroke="#000" stroke-width="1" stroke-dasharray="3 3"/>
<line x1="99" y1="267.5" x2="810" y2="267.5" stroke="#fff" stroke-width="1"/>
<line x1="99" y1="267.5" x2="810" y2="267.5" stroke="#000" stroke-width="1" stroke-dasharray="3 3"/>
<line x1="99" y1="286.5" x2="810" y2="286.5" stroke="#fff" stroke-width="1"/>
<line x1="99" y1="286.5" x2="810" y2="286.5" stroke="#000" stroke-width="1" stroke-dasharray="3 3"/>
<line x1="99" y1="304.5" x2="810" y2="304.5" stroke="#fff" stroke-width="1"/>
<line x1="99" y1="304.5" x2="810" y2="304.5" stroke="#000" stroke-width="1" stroke-dasharray="3 3"/>
<line x1="99" y1="323.5" x2="810" y2="323.5" stroke="#fff" stroke-width="1"/>
<line x1="99" y1="323.5" x2="810" y2="323.5" stroke="#000" stroke-width="1" stroke-dasharray="3 3"/>
<line x1="99" y1="342.5" x2="810" y2="342.5" stroke="#fff" stroke-width="1"/>
<line x1="99" y1="342.5" x2="810" y2="342.5" stroke="#000" stroke-width="1" stroke-dasharray="3 3"/>
<line x1="99" y1="361.5" x2="810" y2="361.5" stroke="#fff" stroke-width="1"/>
<line x1="99" y1="361.5" x2="810" y2="361.5" stroke="#000" stroke-width="1" stroke-dasharray="3 3"/>
<line x1="99" y1="379.5" x2="810" y2="379.5" stroke="#fff" stroke-width="1"/>
<line x1="99" y1="379.5" x2="810" y2="379.5" stroke="#000" stroke-width="1" stroke-dasharray="3 3"/>
<line x1="99" y1="398.5" x2="810" y2="398.5" stroke="#fff" stroke-width="1"/>
<line x1="99" y1="398.5" x2="810" y2="398.5" stroke="#000" stroke-width="1" stroke-dasharray="3 3"/>
<line x1="99" y1="417.5" x2="810" y2="417.5" stroke="#fff" stroke-width="1"/>
<line x1="99" y1="417.5" x2="810" y2="417.5" stroke="#000" stroke-width="1" stroke-dasharray="3 3"/>
<line x1="99" y1="436.5" x2="810" y2="436.5" stroke="#fff" stroke-width="1"/>
<line x1="99" y1="436.5" x2="810" y2="436.5" stroke="#000" stroke-width="1" stroke-dasharray="3 3"/>
<line x1="99" y1="454.5" x2="810" y2="454.5" stroke="#fff" stroke-width="1"/>
<line x1="99" y1="454.5" x2="810" y2="454.5" stroke="#000" stroke-width="1" stroke-dasharray="3 3"/>
<line x1="99" y1="473.5" x2="810" y2="473.5" stroke="#fff" stroke-width="1"/>
<line x1="99" y1="473.5" x2="810" y2="473.5" stroke="#000" stroke-width="1" stroke-dasharray="3 3"/>
<line x1="180.5" y1="118" x2="180.5" y2="492" stroke="#fff" stroke-width="1"/>
<line x1="180.5" y1="118" x2="180.5" y2="492" stroke="#000" stroke-width="1" stroke-dasharray="3 3"/>
<line x1="317.5" y1="118" x2="317.5" y2="492" stroke="#fff" stroke-width="1"/>
<line x1="317.5" y1="118" x2="317.5" y2="492" stroke="#000" stroke-width="1" stroke-dasharray="3 3"/>
<line x1="591.5" y1="118" x2="591.5" y2="492" stroke="#fff" stroke-width="1"/>
<line x1="591.5" y1="118" x2="591.5" y2="492" stroke="#000" stroke-width="1" stroke-dasharray="3 3"/>
<line x1="728.5" y1="118" x2="728.5" y2="492" stroke="#fff" stroke-width="1"/>
<line x1="728.5" y1="118" x2="728.5" y2="492" stroke="#000" stroke-width="1" stroke-dasharray="3 3"/>
<rect x="97" y="491" width="713" height="1" fill="#000"/>
<polygon points="255.8,492.0 258.7,468.0 261.0,439.0 263.0,405.0 266.0,347.0 268.7,290.0 269.3,280.0 270.7,256.4 272.0,240.0 274.1,227.7 277.5,220.9 283.0,211.4 284.3,202.5 289.8,197.0 291.1,190.2 294.5,184.1 300.0,180.0 300.9,176.4 303.1,170.9 306.4,166.0 309.6,162.2 311.3,158.4 317.3,154.6 321.1,151.3 322.7,149.7 331.5,140.4 333.1,135.5 335.8,132.2 336.9,129.5 342.4,125.1 346.8,122.9 350.6,120.2 353.3,117.0 533.6,117.0 539.6,118.5 542.9,120.7 548.4,124.6 553.3,128.4 556.0,132.7 561.5,134.4 565.8,136.6 569.7,137.6 571.3,142.0 574.0,143.7 575.7,149.7 577.8,151.3 583.3,152.9 585.5,158.9 588.8,164.4 590.9,173.1 592.7,175.0 598.2,179.1 603.0,184.5 603.6,188.0 607.7,192.0 610.5,200.2 613.9,205.7 618.0,211.1 620.0,218.6 622.7,229.5 626.1,244.5 627.5,251.4 628.5,263.6 628.9,275.0 630.6,300.0 633.0,347.0 635.0,405.0 636.4,448.0 638.7,476.5 641.6,491.0 642.5,492.0" fill="#008000"/>
<polyline points="255.8,492.0 258.7,468.0 261.0,439.0 263.0,405.0 266.0,347.0 268.7,290.0 269.3,280.0 270.7,256.4 272.0,240.0 274.1,227.7 277.5,220.9 283.0,211.4 284.3,202.5 289.8,197.0 291.1,190.2 294.5,184.1 300.0,180.0 300.9,176.4 303.1,170.9 306.4,166.0 309.6,162.2 311.3,158.4 317.3,154.6 321.1,151.3 322.7,149.7 331.5,140.4 333.1,135.5 335.8,132.2 336.9,129.5 342.4,125.1 346.8,122.9 350.6,120.2 353.3,117.0 533.6,117.0 539.6,118.5 542.9,120.7 548.4,124.6 553.3,128.4 556.0,132.7 561.5,134.4 565.8,136.6 569.7,137.6 571.3,142.0 574.0,143.7 575.7,149.7 577.8,151.3 583.3,152.9 585.5,158.9 588.8,164.4 590.9,173.1 592.7,175.0 598.2,179.1 603.0,184.5 603.6,188.0 607.7,192.0 610.5,200.2 613.9,205.7 618.0,211.1 620.0,218.6 622.7,229.5 626.1,244.5 627.5,251.4 628.5,263.6 628.9,275.0 630.6,300.0 633.0,347.0 635.0,405.0 636.4,448.0 638.7,476.5 641.6,491.0 642.5,492.0" fill="none" stroke="#000" stroke-width="1"/>
<line x1="353" y1="116.5" x2="534" y2="116.5" stroke="#fff" stroke-width="1"/>
<rect x="453" y="117" width="2" height="376" fill="#000"/>
<rect x="248" y="117" width="2" height="375" fill="#008000"/>
<rect x="658" y="117" width="2" height="375" fill="#008000"/>
<rect x="248" y="136" width="2" height="1" fill="#ff80ff"/><rect x="658" y="136" width="2" height="1" fill="#ff80ff"/>
<rect x="248" y="154" width="2" height="1" fill="#ff80ff"/><rect x="658" y="154" width="2" height="1" fill="#ff80ff"/>
<rect x="248" y="173" width="2" height="1" fill="#ff80ff"/><rect x="658" y="173" width="2" height="1" fill="#ff80ff"/>
<rect x="248" y="192" width="2" height="1" fill="#ff80ff"/><rect x="658" y="192" width="2" height="1" fill="#ff80ff"/>
<rect x="248" y="211" width="2" height="1" fill="#ff80ff"/><rect x="658" y="211" width="2" height="1" fill="#ff80ff"/>
<rect x="248" y="229" width="2" height="1" fill="#ff80ff"/><rect x="658" y="229" width="2" height="1" fill="#ff80ff"/>
<rect x="248" y="248" width="2" height="1" fill="#ff80ff"/><rect x="658" y="248" width="2" height="1" fill="#ff80ff"/>
<rect x="248" y="267" width="2" height="1" fill="#ff80ff"/><rect x="658" y="267" width="2" height="1" fill="#ff80ff"/>
<rect x="248" y="286" width="2" height="1" fill="#ff80ff"/><rect x="658" y="286" width="2" height="1" fill="#ff80ff"/>
<rect x="248" y="304" width="2" height="1" fill="#ff80ff"/><rect x="658" y="304" width="2" height="1" fill="#ff80ff"/>
<rect x="248" y="323" width="2" height="1" fill="#ff80ff"/><rect x="658" y="323" width="2" height="1" fill="#ff80ff"/>
<rect x="248" y="342" width="2" height="1" fill="#ff80ff"/><rect x="658" y="342" width="2" height="1" fill="#ff80ff"/>
<rect x="248" y="361" width="2" height="1" fill="#ff80ff"/><rect x="658" y="361" width="2" height="1" fill="#ff80ff"/>
<rect x="248" y="379" width="2" height="1" fill="#ff80ff"/><rect x="658" y="379" width="2" height="1" fill="#ff80ff"/>
<rect x="248" y="398" width="2" height="1" fill="#ff80ff"/><rect x="658" y="398" width="2" height="1" fill="#ff80ff"/>
<rect x="248" y="417" width="2" height="1" fill="#ff80ff"/><rect x="658" y="417" width="2" height="1" fill="#ff80ff"/>
<rect x="248" y="436" width="2" height="1" fill="#ff80ff"/><rect x="658" y="436" width="2" height="1" fill="#ff80ff"/>
<rect x="248" y="454" width="2" height="1" fill="#ff80ff"/><rect x="658" y="454" width="2" height="1" fill="#ff80ff"/>
<rect x="248" y="473" width="2" height="1" fill="#ff80ff"/><rect x="658" y="473" width="2" height="1" fill="#ff80ff"/>
<rect x="98" y="492" width="356" height="1" fill="#fff"/>
<rect x="454" y="492" width="356" height="1" fill="#000"/>
<line x1="98" y1="492.5" x2="810" y2="492.5" stroke="#f00" stroke-width="1" stroke-dasharray="9 6 3 6"/>
<line x1="112.5" y1="493" x2="112.5" y2="495" stroke="#808080" stroke-width="1"/>
<line x1="146.5" y1="493" x2="146.5" y2="495" stroke="#808080" stroke-width="1"/>
<line x1="180.5" y1="493" x2="180.5" y2="497" stroke="#808080" stroke-width="1"/>
<line x1="214.5" y1="493" x2="214.5" y2="495" stroke="#808080" stroke-width="1"/>
<line x1="248.5" y1="493" x2="248.5" y2="495" stroke="#808080" stroke-width="1"/>
<line x1="283.5" y1="493" x2="283.5" y2="495" stroke="#808080" stroke-width="1"/>
<line x1="317.5" y1="493" x2="317.5" y2="497" stroke="#808080" stroke-width="1"/>
<line x1="351.5" y1="493" x2="351.5" y2="495" stroke="#808080" stroke-width="1"/>
<line x1="386.5" y1="493" x2="386.5" y2="495" stroke="#808080" stroke-width="1"/>
<line x1="420.5" y1="493" x2="420.5" y2="495" stroke="#808080" stroke-width="1"/>
<line x1="454.5" y1="493" x2="454.5" y2="497" stroke="#808080" stroke-width="1"/>
<line x1="488.5" y1="493" x2="488.5" y2="495" stroke="#808080" stroke-width="1"/>
<line x1="522.5" y1="493" x2="522.5" y2="495" stroke="#808080" stroke-width="1"/>
<line x1="557.5" y1="493" x2="557.5" y2="495" stroke="#808080" stroke-width="1"/>
<line x1="591.5" y1="493" x2="591.5" y2="497" stroke="#808080" stroke-width="1"/>
<line x1="625.5" y1="493" x2="625.5" y2="495" stroke="#808080" stroke-width="1"/>
<line x1="660.5" y1="493" x2="660.5" y2="495" stroke="#808080" stroke-width="1"/>
<line x1="694.5" y1="493" x2="694.5" y2="495" stroke="#808080" stroke-width="1"/>
<line x1="728.5" y1="493" x2="728.5" y2="497" stroke="#808080" stroke-width="1"/>
<line x1="762.5" y1="493" x2="762.5" y2="495" stroke="#808080" stroke-width="1"/>
<line x1="796.5" y1="493" x2="796.5" y2="495" stroke="#808080" stroke-width="1"/>
<rect x="97" y="117" width="2" height="375" fill="#000"/>
<line x1="94" y1="117.5" x2="97" y2="117.5" stroke="#808080" stroke-width="1"/>
<line x1="96" y1="122.5" x2="97" y2="122.5" stroke="#909090" stroke-width="1"/>
<line x1="96" y1="126.5" x2="97" y2="126.5" stroke="#909090" stroke-width="1"/>
<line x1="96" y1="131.5" x2="97" y2="131.5" stroke="#909090" stroke-width="1"/>
<line x1="94" y1="136.5" x2="97" y2="136.5" stroke="#808080" stroke-width="1"/>
<line x1="96" y1="140.5" x2="97" y2="140.5" stroke="#909090" stroke-width="1"/>
<line x1="96" y1="145.5" x2="97" y2="145.5" stroke="#909090" stroke-width="1"/>
<line x1="96" y1="150.5" x2="97" y2="150.5" stroke="#909090" stroke-width="1"/>
<line x1="94" y1="154.5" x2="97" y2="154.5" stroke="#808080" stroke-width="1"/>
<line x1="96" y1="159.5" x2="97" y2="159.5" stroke="#909090" stroke-width="1"/>
<line x1="96" y1="164.5" x2="97" y2="164.5" stroke="#909090" stroke-width="1"/>
<line x1="96" y1="169.5" x2="97" y2="169.5" stroke="#909090" stroke-width="1"/>
<line x1="94" y1="173.5" x2="97" y2="173.5" stroke="#808080" stroke-width="1"/>
<line x1="96" y1="178.5" x2="97" y2="178.5" stroke="#909090" stroke-width="1"/>
<line x1="96" y1="183.5" x2="97" y2="183.5" stroke="#909090" stroke-width="1"/>
<line x1="96" y1="187.5" x2="97" y2="187.5" stroke="#909090" stroke-width="1"/>
<line x1="94" y1="192.5" x2="97" y2="192.5" stroke="#808080" stroke-width="1"/>
<line x1="96" y1="197.5" x2="97" y2="197.5" stroke="#909090" stroke-width="1"/>
<line x1="96" y1="201.5" x2="97" y2="201.5" stroke="#909090" stroke-width="1"/>
<line x1="96" y1="206.5" x2="97" y2="206.5" stroke="#909090" stroke-width="1"/>
<line x1="94" y1="211.5" x2="97" y2="211.5" stroke="#808080" stroke-width="1"/>
<line x1="96" y1="215.5" x2="97" y2="215.5" stroke="#909090" stroke-width="1"/>
<line x1="96" y1="220.5" x2="97" y2="220.5" stroke="#909090" stroke-width="1"/>
<line x1="96" y1="225.5" x2="97" y2="225.5" stroke="#909090" stroke-width="1"/>
<line x1="94" y1="229.5" x2="97" y2="229.5" stroke="#808080" stroke-width="1"/>
<line x1="96" y1="234.5" x2="97" y2="234.5" stroke="#909090" stroke-width="1"/>
<line x1="96" y1="239.5" x2="97" y2="239.5" stroke="#909090" stroke-width="1"/>
<line x1="96" y1="244.5" x2="97" y2="244.5" stroke="#909090" stroke-width="1"/>
<line x1="94" y1="248.5" x2="97" y2="248.5" stroke="#808080" stroke-width="1"/>
<line x1="96" y1="253.5" x2="97" y2="253.5" stroke="#909090" stroke-width="1"/>
<line x1="96" y1="258.5" x2="97" y2="258.5" stroke="#909090" stroke-width="1"/>
<line x1="96" y1="262.5" x2="97" y2="262.5" stroke="#909090" stroke-width="1"/>
<line x1="94" y1="267.5" x2="97" y2="267.5" stroke="#808080" stroke-width="1"/>
<line x1="96" y1="272.5" x2="97" y2="272.5" stroke="#909090" stroke-width="1"/>
<line x1="96" y1="276.5" x2="97" y2="276.5" stroke="#909090" stroke-width="1"/>
<line x1="96" y1="281.5" x2="97" y2="281.5" stroke="#909090" stroke-width="1"/>
<line x1="94" y1="286.5" x2="97" y2="286.5" stroke="#808080" stroke-width="1"/>
<line x1="96" y1="290.5" x2="97" y2="290.5" stroke="#909090" stroke-width="1"/>
<line x1="96" y1="295.5" x2="97" y2="295.5" stroke="#909090" stroke-width="1"/>
<line x1="96" y1="300.5" x2="97" y2="300.5" stroke="#909090" stroke-width="1"/>
<line x1="94" y1="304.5" x2="97" y2="304.5" stroke="#808080" stroke-width="1"/>
<line x1="96" y1="309.5" x2="97" y2="309.5" stroke="#909090" stroke-width="1"/>
<line x1="96" y1="314.5" x2="97" y2="314.5" stroke="#909090" stroke-width="1"/>
<line x1="96" y1="319.5" x2="97" y2="319.5" stroke="#909090" stroke-width="1"/>
<line x1="94" y1="323.5" x2="97" y2="323.5" stroke="#808080" stroke-width="1"/>
<line x1="96" y1="328.5" x2="97" y2="328.5" stroke="#909090" stroke-width="1"/>
<line x1="96" y1="333.5" x2="97" y2="333.5" stroke="#909090" stroke-width="1"/>
<line x1="96" y1="337.5" x2="97" y2="337.5" stroke="#909090" stroke-width="1"/>
<line x1="94" y1="342.5" x2="97" y2="342.5" stroke="#808080" stroke-width="1"/>
<line x1="96" y1="347.5" x2="97" y2="347.5" stroke="#909090" stroke-width="1"/>
<line x1="96" y1="351.5" x2="97" y2="351.5" stroke="#909090" stroke-width="1"/>
<line x1="96" y1="356.5" x2="97" y2="356.5" stroke="#909090" stroke-width="1"/>
<line x1="94" y1="361.5" x2="97" y2="361.5" stroke="#808080" stroke-width="1"/>
<line x1="96" y1="365.5" x2="97" y2="365.5" stroke="#909090" stroke-width="1"/>
<line x1="96" y1="370.5" x2="97" y2="370.5" stroke="#909090" stroke-width="1"/>
<line x1="96" y1="375.5" x2="97" y2="375.5" stroke="#909090" stroke-width="1"/>
<line x1="94" y1="379.5" x2="97" y2="379.5" stroke="#808080" stroke-width="1"/>
<line x1="96" y1="384.5" x2="97" y2="384.5" stroke="#909090" stroke-width="1"/>
<line x1="96" y1="389.5" x2="97" y2="389.5" stroke="#909090" stroke-width="1"/>
<line x1="96" y1="394.5" x2="97" y2="394.5" stroke="#909090" stroke-width="1"/>
<line x1="94" y1="398.5" x2="97" y2="398.5" stroke="#808080" stroke-width="1"/>
<line x1="96" y1="403.5" x2="97" y2="403.5" stroke="#909090" stroke-width="1"/>
<line x1="96" y1="408.5" x2="97" y2="408.5" stroke="#909090" stroke-width="1"/>
<line x1="96" y1="412.5" x2="97" y2="412.5" stroke="#909090" stroke-width="1"/>
<line x1="94" y1="417.5" x2="97" y2="417.5" stroke="#808080" stroke-width="1"/>
<line x1="96" y1="422.5" x2="97" y2="422.5" stroke="#909090" stroke-width="1"/>
<line x1="96" y1="426.5" x2="97" y2="426.5" stroke="#909090" stroke-width="1"/>
<line x1="96" y1="431.5" x2="97" y2="431.5" stroke="#909090" stroke-width="1"/>
<line x1="94" y1="436.5" x2="97" y2="436.5" stroke="#808080" stroke-width="1"/>
<line x1="96" y1="440.5" x2="97" y2="440.5" stroke="#909090" stroke-width="1"/>
<line x1="96" y1="445.5" x2="97" y2="445.5" stroke="#909090" stroke-width="1"/>
<line x1="96" y1="450.5" x2="97" y2="450.5" stroke="#909090" stroke-width="1"/>
<line x1="94" y1="454.5" x2="97" y2="454.5" stroke="#808080" stroke-width="1"/>
<line x1="96" y1="459.5" x2="97" y2="459.5" stroke="#909090" stroke-width="1"/>
<line x1="96" y1="464.5" x2="97" y2="464.5" stroke="#909090" stroke-width="1"/>
<line x1="96" y1="469.5" x2="97" y2="469.5" stroke="#909090" stroke-width="1"/>
<line x1="94" y1="473.5" x2="97" y2="473.5" stroke="#808080" stroke-width="1"/>
<line x1="96" y1="478.5" x2="97" y2="478.5" stroke="#909090" stroke-width="1"/>
<line x1="96" y1="483.5" x2="97" y2="483.5" stroke="#909090" stroke-width="1"/>
<line x1="96" y1="487.5" x2="97" y2="487.5" stroke="#909090" stroke-width="1"/>
<line x1="94" y1="492.5" x2="97" y2="492.5" stroke="#808080" stroke-width="1"/>
<rect x="734.5" y="128.5" width="64" height="31" fill="#fff" stroke="#a0a0a0"/>
<g shape-rendering="auto"><path d="M739.5,133.5 H789 Q792.8,133.5 792.8,137 V150 Q792.8,153.5 789,153.5 H739.5 Z" fill="#2a00ff"/><rect x="742.6" y="137" width="23" height="13" fill="#fff"/><rect x="745" y="141" width="18.5" height="5.6" rx="1.5" fill="#2a00ff"/><rect x="769" y="137" width="20.6" height="4.8" rx="1.2" fill="#fff"/><rect x="769" y="146" width="20.6" height="4.2" rx="1.2" fill="#fff"/></g>
<rect x="104.5" y="481.5" width="119" height="21" fill="#ffffe1" stroke="#f00" stroke-width="1"/>
<rect x="689.5" y="481.5" width="114" height="21" fill="#ffffe1" stroke="#f00" stroke-width="1"/>
</svg>
<div class="a yl" style="top:111px">100%</div>
<div class="a yl" style="top:130px">95%</div>
<div class="a yl" style="top:148px">90%</div>
<div class="a yl" style="top:167px">85%</div>
<div class="a yl" style="top:186px">80%</div>
<div class="a yl" style="top:205px">75%</div>
<div class="a yl" style="top:224px">70%</div>
<div class="a yl" style="top:242px">65%</div>
<div class="a yl" style="top:261px">60%</div>
<div class="a yl" style="top:280px">55%</div>
<div class="a yl" style="top:298px">50%</div>
<div class="a yl" style="top:317px">45%</div>
<div class="a yl" style="top:336px">40%</div>
<div class="a yl" style="top:355px">35%</div>
<div class="a yl" style="top:374px">30%</div>
<div class="a yl" style="top:392px">25%</div>
<div class="a yl" style="top:411px">20%</div>
<div class="a yl" style="top:430px">15%</div>
<div class="a yl" style="top:448px">10%</div>
<div class="a yl" style="top:467px">5%</div>
<div class="a yl" style="top:486px">0%</div>
<div class="a xl" style="left:158.5px;text-align:left;width:auto">-100 kHz</div>
<div class="a xl" style="left:298.5px;text-align:left;width:auto">-50 kHz</div>
<div class="a xl" style="left:440px;text-align:left;width:auto">0 kHz</div>
<div class="a xl" style="left:574px;text-align:left;width:auto">50 kHz</div>
<div class="a xl" style="left:708.5px;text-align:left;width:auto">100 kHz</div>
<div class="lbl" style="left:111px;top:486px;letter-spacing:-0.1px">Neg: -75.0 kHz - 0.0%</div>
<div class="lbl" style="left:696px;top:486px;letter-spacing:-0.1px">Pos: 75.0 kHz - 0.0%</div>

<!-- caption buttons -->
<div class="a" style="left:722px;top:40px;width:103px;height:20px;border:1px solid #4a5868;border-top:none;border-radius:0 0 4px 4px;overflow:hidden">
 <div class="a" style="left:0;top:0;width:27px;height:19px;background:linear-gradient(#dfe8f2 0%,#c9d7e6 45%,#a9bed4 50%,#b8cde0 100%);border-right:1px solid #6e7f91"></div>
 <div class="a" style="left:28px;top:0;width:26px;height:19px;background:linear-gradient(#dfe8f2 0%,#c9d7e6 45%,#a9bed4 50%,#b8cde0 100%);border-right:1px solid #7a2a1a"></div>
 <div class="a" style="left:55px;top:0;width:48px;height:19px;background:linear-gradient(#e7ada0 0%,#db9484 45%,#c64a33 52%,#d36a55 100%)"></div>
</div>
<div class="a" style="left:731px;top:49px;width:11px;height:5px;background:#fff;border:1px solid #39424c"></div>
<div class="a" style="left:758px;top:45px;width:11px;height:10px;background:#fff;border:1px solid #39424c"></div>
<div class="a" style="left:761px;top:48px;width:5px;height:4px;background:#b9c6d4;border:1px solid #39424c"></div>
<svg width="872" height="733" style="z-index:3"><g transform="translate(801.5,49.8)"><path d="M-3.2,-2.6 L3.2,2.6 M3.2,-2.6 L-3.2,2.6" stroke="#39424c" stroke-width="4.4" stroke-linecap="square"/><path d="M-3.2,-2.6 L3.2,2.6 M3.2,-2.6 L-3.2,2.6" stroke="#fff" stroke-width="2.4" stroke-linecap="square"/></g></svg>

<!-- radio row -->
<div class="a" style="left:69px;top:522px;width:12px;height:12px;border-radius:50%;border:1px solid #8e8f8f;background:radial-gradient(circle at 40% 40%,#fafafa,#d6d6d6)"></div>
<div class="lbl" style="left:85px;top:522px">Total</div>
<div class="a" style="left:125px;top:522px;width:12px;height:12px;border-radius:50%;border:1px solid #8e8f8f;background:radial-gradient(circle at 40% 40%,#fafafa,#d6d6d6)"></div>
<div class="a" style="left:128px;top:525px;width:6px;height:6px;border-radius:50%;background:radial-gradient(circle at 40% 35%,#7ec0ef,#1a5fa0 60%,#0f3d70)"></div>
<div class="lbl" style="left:140px;top:522px">Pos/Neg</div>
<div class="lbl" style="left:210px;top:522px;letter-spacing:0.04px">Pos: 75.0 kHz - Overshoot:0.0%, Neg: -75.0 kHz - Overshoot:0.0%, Measure Time:00:00:33</div>

<!-- LCD -->
<div class="a" style="left:56px;top:549px;width:291px;height:52px;background:#000"></div>
<svg width="872" height="733"><polygon points="64.90,555.00 83.00,555.00 78.28,560.00 68.78,560.00" fill="#0b540b"/>
<polygon points="66.42,588.00 75.92,588.00 79.80,593.00 61.70,593.00" fill="#0b540b"/>
<polygon points="63.06,556.70 67.69,561.00 66.87,570.80 61.66,573.30" fill="#0b540b"/>
<polygon points="84.56,556.70 83.16,573.30 78.37,570.80 79.19,561.00" fill="#0b540b"/>
<polygon points="61.54,574.70 66.33,577.20 65.51,587.00 60.14,591.30" fill="#0b540b"/>
<polygon points="83.04,574.70 81.64,591.30 77.01,587.00 77.83,577.20" fill="#0b540b"/>
<polygon points="63.30,574.00 67.81,571.50 77.31,571.50 81.40,574.00 76.89,576.50 67.39,576.50" fill="#0b540b"/>
<polygon points="90.90,555.00 109.00,555.00 104.28,560.00 94.78,560.00" fill="#00ff00"/>
<polygon points="92.42,588.00 101.92,588.00 105.80,593.00 87.70,593.00" fill="#00ff00"/>
<polygon points="89.06,556.70 93.69,561.00 92.87,570.80 87.66,573.30" fill="#00ff00"/>
<polygon points="110.56,556.70 109.16,573.30 104.37,570.80 105.19,561.00" fill="#00ff00"/>
<polygon points="87.54,574.70 92.33,577.20 91.51,587.00 86.14,591.30" fill="#0b540b"/>
<polygon points="109.04,574.70 107.64,591.30 103.01,587.00 103.83,577.20" fill="#00ff00"/>
<polygon points="89.30,574.00 93.81,571.50 103.31,571.50 107.40,574.00 102.89,576.50 93.39,576.50" fill="#00ff00"/>
<polygon points="116.90,555.00 135.00,555.00 130.28,560.00 120.78,560.00" fill="#0b540b"/>
<polygon points="118.42,588.00 127.92,588.00 131.80,593.00 113.70,593.00" fill="#0b540b"/>
<polygon points="115.06,556.70 119.69,561.00 118.87,570.80 113.66,573.30" fill="#00ff00"/>
<polygon points="136.56,556.70 135.16,573.30 130.37,570.80 131.19,561.00" fill="#00ff00"/>
<polygon points="113.54,574.70 118.33,577.20 117.51,587.00 112.14,591.30" fill="#0b540b"/>
<polygon points="135.04,574.70 133.64,591.30 129.01,587.00 129.83,577.20" fill="#00ff00"/>
<polygon points="115.30,574.00 119.81,571.50 129.31,571.50 133.40,574.00 128.89,576.50 119.39,576.50" fill="#00ff00"/>
<rect x="138" y="588" width="4" height="5" fill="#00ff00"/>
<polygon points="149.90,555.00 168.00,555.00 163.28,560.00 153.78,560.00" fill="#0b540b"/>
<polygon points="151.42,588.00 160.92,588.00 164.80,593.00 146.70,593.00" fill="#0b540b"/>
<polygon points="148.06,556.70 152.69,561.00 151.87,570.80 146.66,573.30" fill="#0b540b"/>
<polygon points="169.56,556.70 168.16,573.30 163.37,570.80 164.19,561.00" fill="#00ff00"/>
<polygon points="146.54,574.70 151.33,577.20 150.51,587.00 145.14,591.30" fill="#0b540b"/>
<polygon points="168.04,574.70 166.64,591.30 162.01,587.00 162.83,577.20" fill="#00ff00"/>
<polygon points="148.30,574.00 152.81,571.50 162.31,571.50 166.40,574.00 161.89,576.50 152.39,576.50" fill="#0b540b"/>
<polygon points="175.90,555.00 194.00,555.00 189.28,560.00 179.78,560.00" fill="#00ff00"/>
<polygon points="177.42,588.00 186.92,588.00 190.80,593.00 172.70,593.00" fill="#00ff00"/>
<polygon points="174.06,556.70 178.69,561.00 177.87,570.80 172.66,573.30" fill="#00ff00"/>
<polygon points="195.56,556.70 194.16,573.30 189.37,570.80 190.19,561.00" fill="#00ff00"/>
<polygon points="172.54,574.70 177.33,577.20 176.51,587.00 171.14,591.30" fill="#00ff00"/>
<polygon points="194.04,574.70 192.64,591.30 188.01,587.00 188.83,577.20" fill="#00ff00"/>
<polygon points="174.30,574.00 178.81,571.50 188.31,571.50 192.40,574.00 187.89,576.50 178.39,576.50" fill="#0b540b"/>
<circle cx="208.5" cy="565" r="7.3" fill="none" stroke="#00ff00" stroke-width="1.8"/>
<circle cx="216.8" cy="565" r="7.3" fill="none" stroke="#00ff00" stroke-width="1.8"/>
<g><circle cx="241" cy="565.2" r="9.4" fill="#00ff00"/><circle cx="252" cy="565.2" r="9.4" fill="#00ff00"/><path d="M233.2,565 A7.8,7.8 0 0 1 248.8,565 M244.2,565 A7.8,7.8 0 0 1 259.8,565" fill="none" stroke="#000" stroke-width="0.9"/><path d="M234.9,565 A6.1,6.1 0 0 1 247.1,565 M245.9,565 A6.1,6.1 0 0 1 258.1,565" fill="none" stroke="#000" stroke-width="0.9"/><path d="M248.5,559 A7.5,7.5 0 0 0 245,571" fill="none" stroke="#000" stroke-width="1"/><circle cx="241" cy="565" r="4.4" fill="#000"/><circle cx="252" cy="565" r="4.4" fill="#000"/><circle cx="241" cy="565" r="3" fill="none" stroke="#0a8a0a" stroke-width="1.3"/><circle cx="252" cy="565" r="3" fill="none" stroke="#0a8a0a" stroke-width="1.3"/><circle cx="241" cy="565" r="1.4" fill="#000"/><circle cx="252" cy="565" r="1.4" fill="#000"/></g>
<g stroke="#00ff00" stroke-width="2" fill="none"><path d="M278.5,557 V574"/><path d="M270,557.5 L278.5,567 L287,557.5"/></g>
<rect x="288" y="557" width="4" height="2" fill="#0a5a0a"/>
<rect x="288" y="560" width="4" height="2" fill="#0a5a0a"/>
<rect x="288" y="563" width="4" height="2" fill="#0a5a0a"/>
<rect x="288" y="566" width="4" height="2" fill="#00ff00"/>
<rect x="288" y="569" width="4" height="2" fill="#00ff00"/>
<rect x="288" y="572" width="4" height="2" fill="#00ff00"/>
<rect x="300" y="555" width="20" height="12" fill="#0a5a0a"/>
<rect x="300.5" y="555.5" width="19" height="19" fill="none" stroke="#0a7a0a"/>
<path d="M302,570.5 H311 Q315,570.5 318,574" fill="none" stroke="#00e000" stroke-width="1"/>
<text x="301" y="561" font-family="Liberation Mono" font-weight="bold" font-size="6.5" fill="#00ff00">DE-</text>
<text x="301" y="566.5" font-family="Liberation Mono" font-weight="bold" font-size="6.5" fill="#00ff00" textLength="18">EMPH</text>
<text x="323" y="562" font-family="Liberation Mono" font-weight="bold" font-size="7" fill="#0a5a0a" textLength="12">OFF</text>
<text x="323" y="568" font-family="Liberation Mono" font-weight="bold" font-size="7" fill="#00ff00">50</text>
<text x="323" y="574" font-family="Liberation Mono" font-weight="bold" font-size="7" fill="#0a5a0a">75</text>
<path d="M200,584.5 V581 H209.5" fill="none" stroke="#0a8a0a" stroke-width="2"/><path d="M236,581 H245 V584.5" fill="none" stroke="#0a8a0a" stroke-width="2"/><text x="222.75" y="584.5" text-anchor="middle" font-family="Liberation Mono" font-weight="bold" font-size="7" fill="#00ff00" textLength="22.5">INPUT</text>
<path d="M249,584.5 V581 H262.5" fill="none" stroke="#0a8a0a" stroke-width="2"/><path d="M279,581 H291 V584.5" fill="none" stroke="#0a8a0a" stroke-width="2"/><text x="270.75" y="584.5" text-anchor="middle" font-family="Liberation Mono" font-weight="bold" font-size="7" fill="#00ff00" textLength="12.5">ATT</text>
<path d="M296,584.5 V581 H305" fill="none" stroke="#0a8a0a" stroke-width="2"/><path d="M338,581 H343 V584.5" fill="none" stroke="#0a8a0a" stroke-width="2"/><text x="321.5" y="584.5" text-anchor="middle" font-family="Liberation Mono" font-weight="bold" font-size="7" fill="#00ff00" textLength="29">QUALITY</text>
<rect x="199" y="586" width="23" height="7" fill="#0b8a0b"/><text x="210.5" y="592" text-anchor="middle" font-family="Liberation Mono" font-weight="bold" font-size="6.6" fill="#00ff00" textLength="12.899999999999999" lengthAdjust="spacingAndGlyphs">ANT</text>
<rect x="223" y="586" width="23" height="7" fill="#064006"/><text x="234.5" y="592" text-anchor="middle" font-family="Liberation Mono" font-weight="bold" font-size="6.6" fill="#021802" textLength="12.899999999999999" lengthAdjust="spacingAndGlyphs">MPX</text>
<rect x="248" y="586" width="13" height="7" fill="#064006"/><text x="254.5" y="592" text-anchor="middle" font-family="Liberation Mono" font-weight="bold" font-size="6.6" fill="#021802" textLength="11" lengthAdjust="spacingAndGlyphs">-10</text>
<rect x="262" y="586" width="15" height="7" fill="#064006"/><text x="269.5" y="592" text-anchor="middle" font-family="Liberation Mono" font-weight="bold" font-size="6.6" fill="#021802" textLength="12.899999999999999" lengthAdjust="spacingAndGlyphs">-20</text>
<rect x="278" y="586" width="14" height="7" fill="#064006"/><text x="285.0" y="592" text-anchor="middle" font-family="Liberation Mono" font-weight="bold" font-size="6.6" fill="#021802" textLength="12" lengthAdjust="spacingAndGlyphs">-30</text>
<rect x="295" y="586" width="16" height="7" fill="#064006"/><text x="303.0" y="592" text-anchor="middle" font-family="Liberation Mono" font-weight="bold" font-size="6.6" fill="#021802" textLength="12.899999999999999" lengthAdjust="spacingAndGlyphs">LOW</text>
<rect x="312" y="586" width="21" height="7" fill="#064006"/><text x="322.5" y="592" text-anchor="middle" font-family="Liberation Mono" font-weight="bold" font-size="6.6" fill="#021802" textLength="17.2" lengthAdjust="spacingAndGlyphs">GOOD</text>
<rect x="334" y="586" width="10" height="7" fill="#0b8a0b"/><text x="339.0" y="592" text-anchor="middle" font-family="Liberation Mono" font-weight="bold" font-size="6.6" fill="#00ff00" textLength="8" lengthAdjust="spacingAndGlyphs">HI</text></svg>

<!-- freq entry -->
<div class="a" style="left:352px;top:549px;width:78px;height:21px;background:#fff;border:1px solid #c5d2de;border-top-color:#abadb3"></div>
<div class="lbl" style="left:352px;top:553px;width:70px;text-align:right">94.10</div>
<div class="btn" style="left:352px;top:577px;width:77px;height:23px;line-height:21px;padding-top:1px">SET</div>
<div class="btn" style="left:434px;top:550px;width:22px;height:23px"></div>
<div class="btn" style="left:434px;top:577px;width:22px;height:23px"></div>
<div class="btn mono" style="left:457px;top:550px;width:48px;height:23px">99.90</div>
<div class="btn mono" style="left:457px;top:577px;width:48px;height:23px">94.10</div>
<div class="btn" style="left:510px;top:550px;width:21px;height:23px"></div>
<div class="btn" style="left:510px;top:577px;width:21px;height:23px"></div>
<div class="btn mono" style="left:532px;top:550px;width:48px;height:23px">104.50</div>
<div class="btn mono" style="left:532px;top:577px;width:48px;height:23px">103.90</div>
<svg width="872" height="733"><g transform="translate(437,554)"><path d="M0.5,1.5 Q0.5,0.5 1.5,0.5 H14.5 Q15.5,0.5 15.5,1.5 V15.5 H2 L0.5,14 Z" fill="#5a8ee0" stroke="#1d4fc4" stroke-width="1"/><rect x="4" y="1" width="8" height="6" fill="#fff"/><rect x="5" y="2" width="6" height="4" fill="#d0d0d0"/><rect x="4.5" y="10.5" width="7" height="5" fill="#c8c8c8" stroke="#222" stroke-width="1"/><rect x="6" y="11" width="2" height="4" fill="#2a5ad8"/></g><g transform="translate(437,581)"><path d="M0.5,1.5 Q0.5,0.5 1.5,0.5 H14.5 Q15.5,0.5 15.5,1.5 V15.5 H2 L0.5,14 Z" fill="#5a8ee0" stroke="#1d4fc4" stroke-width="1"/><rect x="4" y="1" width="8" height="6" fill="#fff"/><rect x="5" y="2" width="6" height="4" fill="#d0d0d0"/><rect x="4.5" y="10.5" width="7" height="5" fill="#c8c8c8" stroke="#222" stroke-width="1"/><rect x="6" y="11" width="2" height="4" fill="#2a5ad8"/></g><g transform="translate(513,554)"><path d="M0.5,1.5 Q0.5,0.5 1.5,0.5 H14.5 Q15.5,0.5 15.5,1.5 V15.5 H2 L0.5,14 Z" fill="#5a8ee0" stroke="#1d4fc4" stroke-width="1"/><rect x="4" y="1" width="8" height="6" fill="#fff"/><rect x="5" y="2" width="6" height="4" fill="#d0d0d0"/><rect x="4.5" y="10.5" width="7" height="5" fill="#c8c8c8" stroke="#222" stroke-width="1"/><rect x="6" y="11" width="2" height="4" fill="#2a5ad8"/></g><g transform="translate(513,581)"><path d="M0.5,1.5 Q0.5,0.5 1.5,0.5 H14.5 Q15.5,0.5 15.5,1.5 V15.5 H2 L0.5,14 Z" fill="#5a8ee0" stroke="#1d4fc4" stroke-width="1"/><rect x="4" y="1" width="8" height="6" fill="#fff"/><rect x="5" y="2" width="6" height="4" fill="#d0d0d0"/><rect x="4.5" y="10.5" width="7" height="5" fill="#c8c8c8" stroke="#222" stroke-width="1"/><rect x="6" y="11" width="2" height="4" fill="#2a5ad8"/></g></svg>
<div class="btn" style="left:585px;top:550px;width:73px;height:23px;line-height:21px;padding-top:1px">Freeze</div>
<div class="btn" style="left:663px;top:550px;width:73px;height:23px;line-height:21px;padding-top:1px">Settings</div>
<div class="a" style="left:740px;top:550px;width:73px;height:23px;border:1px solid #d9d9d9;border-radius:3px;background:#f4f4f4;color:#8d8d8d;line-height:21px;padding-left:3px">TCP</div>
<div class="a" style="left:800px;top:559px;width:0;height:0;border-left:4px solid transparent;border-right:4px solid transparent;border-top:4px solid #a9a9a9"></div>
<div class="btn" style="left:585px;top:577px;width:73px;height:23px;line-height:21px;padding-top:1px">Print</div>
<div class="btn" style="left:663px;top:577px;width:73px;height:23px;line-height:21px;padding-top:1px">View Map</div>
<div class="btn" style="left:740px;top:577px;width:73px;height:23px;line-height:21px;padding-top:1px">Disconnect</div>

<!-- group boxes -->
<div class="gb" style="left:56px;top:615px;width:92px;height:42px"></div><div class="gbl" style="left:60px;top:610px">Input</div>
<div class="gb" style="left:153px;top:615px;width:224px;height:42px"></div><div class="gbl" style="left:158px;top:610px">Attenuation</div>
<div class="gb" style="left:382px;top:615px;width:92px;height:42px"></div><div class="gbl" style="left:387px;top:610px">Stereo</div>
<div class="gb" style="left:480px;top:615px;width:137px;height:42px"></div><div class="gbl" style="left:485px;top:610px;letter-spacing:-0.4px">Deemphasis</div>
<div class="gb" style="left:623px;top:615px;width:92px;height:42px"></div><div class="gbl" style="left:628px;top:610px">SCA</div>
<div class="gb" style="left:721px;top:615px;width:92px;height:42px"></div><div class="gbl" style="left:725px;top:610px;letter-spacing:-0.6px">RDS Mode</div>
<div class="btn on" style="left:60px;top:629px;width:39px;height:20px;line-height:18px;padding-top:1px">ANT</div>
<div class="btn" style="left:103px;top:629px;width:39px;height:20px;line-height:18px;padding-top:1px">MPX</div>
<div class="btn" style="left:158px;top:629px;width:39px;height:20px;line-height:18px;padding-top:1px">OFF</div>
<div class="btn" style="left:202px;top:629px;width:39px;height:20px;line-height:18px;padding-top:1px">-10 dB</div>
<div class="btn" style="left:246px;top:629px;width:39px;height:20px;line-height:18px;padding-top:1px">-20 dB</div>
<div class="btn" style="left:289px;top:629px;width:39px;height:20px;line-height:18px;padding-top:1px">-30 dB</div>
<div class="btn on" style="left:333px;top:629px;width:39px;height:20px;line-height:18px;padding-top:1px">Auto</div>
<div class="btn" style="left:387px;top:629px;width:39px;height:20px;line-height:18px;padding-top:1px">Mono</div>
<div class="btn on" style="left:431px;top:629px;width:39px;height:20px;line-height:18px;padding-top:1px">Stereo</div>
<div class="btn" style="left:485px;top:629px;width:39px;height:20px;line-height:18px;padding-top:1px">OFF</div>
<div class="btn on" style="left:529px;top:629px;width:39px;height:20px;line-height:18px;padding-top:1px">50&#956;s</div>
<div class="btn" style="left:573px;top:629px;width:39px;height:20px;line-height:18px;padding-top:1px">75&#956;s</div>
<div class="btn on" style="left:628px;top:629px;width:39px;height:20px;line-height:18px;padding-top:1px">38 kHz</div>
<div class="btn" style="left:672px;top:629px;width:39px;height:20px;line-height:18px;padding-top:1px">57 kHz</div>
<div class="btn on" style="left:725px;top:629px;width:39px;height:20px;line-height:18px;padding-top:1px">RDS</div>
<div class="btn" style="left:769px;top:629px;width:39px;height:20px;line-height:18px;padding-top:1px">RBDS</div>

<!-- status bar -->
<div class="a" style="left:49px;top:663px;width:775px;height:21px;background:#008000"></div>
<div class="lbl" style="left:58px;top:668px;color:#fff;font-weight:bold;font-size:12px;letter-spacing:-0.15px">Connected to DB3000 Demo Unit.</div>
</body></html>
